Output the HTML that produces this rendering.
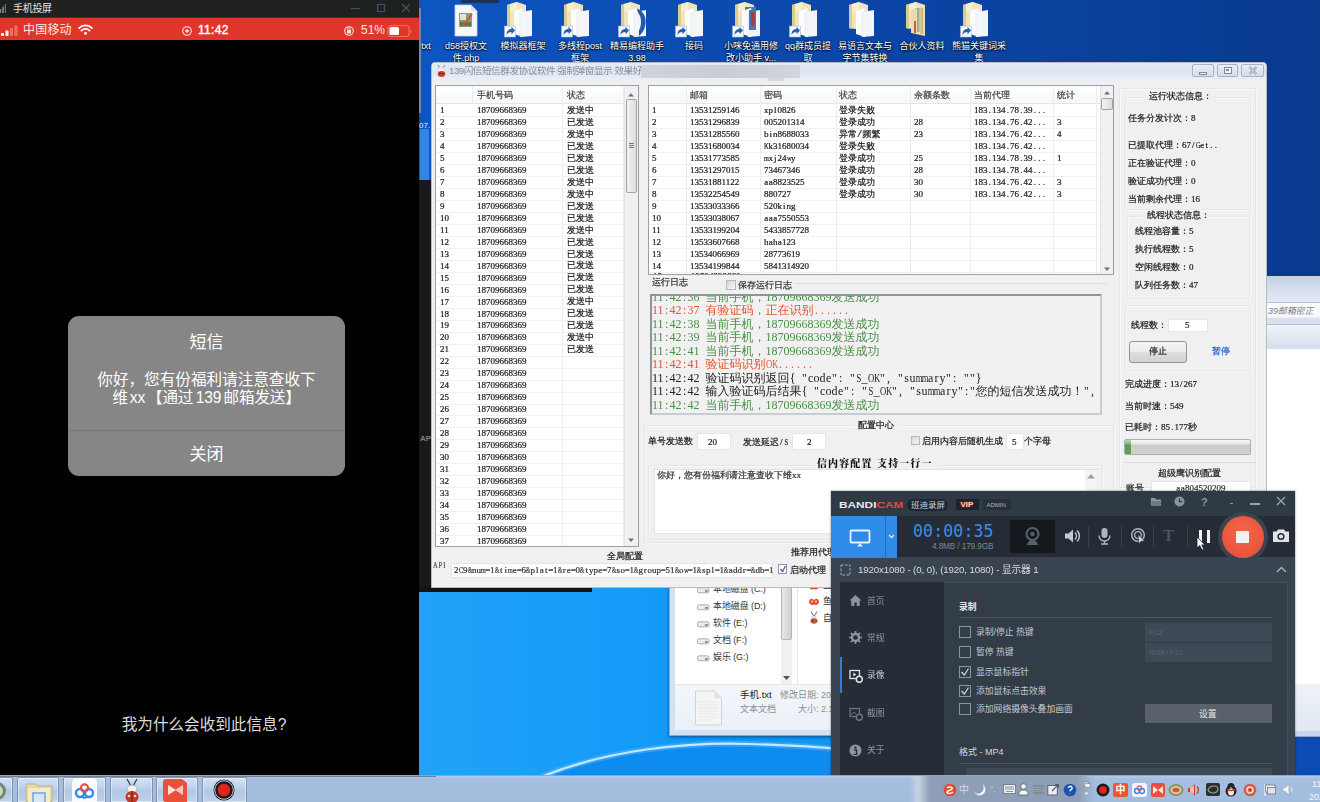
<!DOCTYPE html><html lang="zh"><head><meta charset="utf-8"><title>screen</title><style>
html,body{margin:0;padding:0}
body{width:1320px;height:802px;overflow:hidden;position:relative;background:#0a3f9e;font-family:"Liberation Sans","Noto Sans CJK SC",sans-serif;font-size:9px;color:#222}
div,span,svg{position:absolute;box-sizing:border-box}
span.i{position:static}
.t{white-space:nowrap;line-height:1}
.s{font-family:"Liberation Mono","WenQuanYi Zen Hei","Noto Sans CJK SC",monospace;font-size:9px;color:#1c1c1c;white-space:nowrap;line-height:10px;-webkit-text-stroke-width:.22px}
.m{font-family:"Liberation Serif","WenQuanYi Zen Hei",serif}
b{display:inline-flex;justify-content:center;font-weight:normal;white-space:pre}
.dl{color:#fff;font-size:9px;line-height:12px;text-align:center;width:64px;text-shadow:0 1px 2px #000,0 0 2px #000;font-family:"Liberation Sans","Noto Sans CJK SC",sans-serif}
.gb{border:1px solid #e6e6e6;border-radius:2px;box-shadow:inset 1px 1px 0 #f8f8f8,1px 1px 0 #f8f8f8}
.inp{background:#fff;border:1px solid #e3e6ea}
.lg{font-family:"Liberation Serif","WenQuanYi Zen Hei","Noto Sans CJK SC",sans-serif;font-size:12px;line-height:14px;height:14px}
.lm{font-family:"Liberation Serif",serif;font-size:12px}
</style></head><body>
<div style="left:0;top:0;width:1320px;height:802px;background:linear-gradient(90deg,#0d55c2 420px,#0b48ab 800px,#083a8e 1320px)"></div>
<div style="left:419px;top:587px;width:901px;height:190px;background:linear-gradient(90deg,#22a2fa 0,#129af7 250px,#0f95f4 420px)"></div>
<svg style="left:419px;top:587px" width="420" height="190" viewBox="0 0 420 190"><path d="M128 190 C195 163 270 157 330 158 S400 161 420 163 L420 190Z" fill="#0d8bf0"/><path d="M122 190 C190 162 270 155 330 157 S400 160 420 162" fill="none" stroke="#62bdff" stroke-width="6" opacity=".4"/><path d="M122 190 C190 162 270 155 330 157 S400 160 420 162" fill="none" stroke="#d6eeff" stroke-width="2.200" opacity=".9"/></svg>
<svg style="left:449px;top:1px" width="34" height="38" viewBox="0 0 34 38"><path d="M6 4h16l6 6v25H6z" fill="#f6f7f9" stroke="#cfd4db" stroke-width=".8"/><path d="M22 4v6h6z" fill="#d9dde4"/><rect x="10" y="12" width="13" height="14" fill="#8a9a7c"/><rect x="11" y="13" width="6" height="6" fill="#dfe6d2"/><rect x="11" y="21" width="11" height="4" fill="#5d7a50"/><path d="M14 25l9-12" stroke="#d9542f" stroke-width="1.800"/></svg>
<div class="dl" style="left:434px;top:40px">d58授权文<br>件.php</div>
<svg style="left:504px;top:1px" width="34" height="38" viewBox="0 0 34 38"><path d="M3 4l10-3 9 3v26l-19-3z" fill="#efe5bd"/><path d="M3 4l3-1v25l-3-1z" fill="#dccb8f"/><path d="M6 3l7-2v8l-7 2z" fill="#f6efcf"/><path d="M10 10l9-3v29l-9-3z" fill="#fdfdfd"/><path d="M19 7v29" stroke="#d5d9df" stroke-width=".7"/><path d="M16 11l12-2v26l-12 1z" fill="#f3f5f9"/><path d="M16 11v25" stroke="#dfe3e8" stroke-width=".6"/><rect x="0.500" y="25" width="11" height="11" fill="#f4f7fb" stroke="#a9b8cd" stroke-width=".6"/><path d="M2.500 34c0-4.500 2.500-6 5-6v-2.300l3.500 3.800-3.500 3.800v-2.300c-2.500 0-4 1-5 3z" fill="#2c5fb3"/></svg>
<div class="dl" style="left:491px;top:40px">模拟器框架</div>
<svg style="left:561px;top:1px" width="34" height="38" viewBox="0 0 34 38"><path d="M3 4l10-3 9 3v26l-19-3z" fill="#efe5bd"/><path d="M3 4l3-1v25l-3-1z" fill="#dccb8f"/><path d="M6 3l7-2v8l-7 2z" fill="#f6efcf"/><path d="M10 10l9-3v29l-9-3z" fill="#fdfdfd"/><path d="M19 7v29" stroke="#d5d9df" stroke-width=".7"/><path d="M16 11l12-2v26l-12 1z" fill="#f3f5f9"/><path d="M16 11v25" stroke="#dfe3e8" stroke-width=".6"/><rect x="0.500" y="25" width="11" height="11" fill="#f4f7fb" stroke="#a9b8cd" stroke-width=".6"/><path d="M2.500 34c0-4.500 2.500-6 5-6v-2.300l3.500 3.800-3.500 3.800v-2.300c-2.500 0-4 1-5 3z" fill="#2c5fb3"/></svg>
<div class="dl" style="left:548px;top:40px">多线程post<br>框架</div>
<svg style="left:618px;top:1px" width="34" height="38" viewBox="0 0 34 38"><path d="M3 4l10-3 9 3v26l-19-3z" fill="#efe5bd"/><path d="M3 4l3-1v25l-3-1z" fill="#dccb8f"/><path d="M6 3l7-2v8l-7 2z" fill="#f6efcf"/><path d="M18 7c9 3 10 18 1 25z" fill="#2d62b3"/><path d="M10 10l9-3v29l-9-3z" fill="#fdfdfd"/><path d="M19 7v29" stroke="#d5d9df" stroke-width=".7"/><path d="M16 11l12-2v26l-12 1z" fill="#f3f5f9"/><path d="M16 11v25" stroke="#dfe3e8" stroke-width=".6"/><path d="M20 8c10 4 10 20 1 27z" fill="#2459ad"/><path d="M20 12c4 3 4 14 0 19z" fill="#f3f5f9"/><rect x="0.500" y="25" width="11" height="11" fill="#f4f7fb" stroke="#a9b8cd" stroke-width=".6"/><path d="M2.500 34c0-4.500 2.500-6 5-6v-2.300l3.500 3.800-3.500 3.800v-2.300c-2.500 0-4 1-5 3z" fill="#2c5fb3"/></svg>
<div class="dl" style="left:605px;top:40px">精易编程助手<br>3.98</div>
<svg style="left:675px;top:1px" width="34" height="38" viewBox="0 0 34 38"><path d="M3 4l10-3 9 3v26l-19-3z" fill="#efe5bd"/><path d="M3 4l3-1v25l-3-1z" fill="#dccb8f"/><path d="M6 3l7-2v8l-7 2z" fill="#f6efcf"/><path d="M10 10l9-3v29l-9-3z" fill="#fdfdfd"/><path d="M19 7v29" stroke="#d5d9df" stroke-width=".7"/><path d="M16 11l12-2v26l-12 1z" fill="#f3f5f9"/><path d="M16 11v25" stroke="#dfe3e8" stroke-width=".6"/><rect x="0.500" y="25" width="11" height="11" fill="#f4f7fb" stroke="#a9b8cd" stroke-width=".6"/><path d="M2.500 34c0-4.500 2.500-6 5-6v-2.300l3.500 3.800-3.500 3.800v-2.300c-2.500 0-4 1-5 3z" fill="#2c5fb3"/></svg>
<div class="dl" style="left:662px;top:40px">接码</div>
<svg style="left:732px;top:1px" width="34" height="38" viewBox="0 0 34 38"><path d="M3 4l10-3 9 3v26l-19-3z" fill="#efe5bd"/><path d="M3 4l3-1v25l-3-1z" fill="#dccb8f"/><path d="M6 3l7-2v8l-7 2z" fill="#f6efcf"/><rect x="13" y="6" width="11" height="22" fill="#4977bd"/><rect x="17" y="8" width="4.500" height="16" fill="#b5382e"/><path d="M10 10l9-3v29l-9-3z" fill="#fdfdfd"/><path d="M19 7v29" stroke="#d5d9df" stroke-width=".7"/><path d="M16 11l12-2v26l-12 1z" fill="#f3f5f9"/><path d="M16 11v25" stroke="#dfe3e8" stroke-width=".6"/><rect x="17" y="9" width="7" height="20" fill="#4977bd"/><rect x="19" y="11" width="3.500" height="14" fill="#b5382e"/><rect x="0.500" y="25" width="11" height="11" fill="#f4f7fb" stroke="#a9b8cd" stroke-width=".6"/><path d="M2.500 34c0-4.500 2.500-6 5-6v-2.300l3.500 3.800-3.500 3.800v-2.300c-2.500 0-4 1-5 3z" fill="#2c5fb3"/></svg>
<div class="dl" style="left:719px;top:40px">小咪免通用修<br>改小助手 v...</div>
<svg style="left:789px;top:1px" width="34" height="38" viewBox="0 0 34 38"><path d="M3 4l10-3 9 3v26l-19-3z" fill="#efe5bd"/><path d="M3 4l3-1v25l-3-1z" fill="#dccb8f"/><path d="M6 3l7-2v8l-7 2z" fill="#f6efcf"/><path d="M10 10l9-3v29l-9-3z" fill="#fdfdfd"/><path d="M19 7v29" stroke="#d5d9df" stroke-width=".7"/><path d="M16 11l12-2v26l-12 1z" fill="#f3f5f9"/><path d="M16 11v25" stroke="#dfe3e8" stroke-width=".6"/><rect x="0.500" y="25" width="11" height="11" fill="#f4f7fb" stroke="#a9b8cd" stroke-width=".6"/><path d="M2.500 34c0-4.500 2.500-6 5-6v-2.300l3.500 3.800-3.500 3.800v-2.300c-2.500 0-4 1-5 3z" fill="#2c5fb3"/></svg>
<div class="dl" style="left:776px;top:40px">qq群成员提<br>取</div>
<svg style="left:846px;top:1px" width="34" height="38" viewBox="0 0 34 38"><path d="M3 4l10-3 9 3v26l-19-3z" fill="#efe5bd"/><path d="M3 4l3-1v25l-3-1z" fill="#dccb8f"/><path d="M6 3l7-2v8l-7 2z" fill="#f6efcf"/><path d="M10 10l9-3v29l-9-3z" fill="#fdfdfd"/><path d="M19 7v29" stroke="#d5d9df" stroke-width=".7"/><path d="M16 11l12-2v26l-12 1z" fill="#f3f5f9"/><path d="M16 11v25" stroke="#dfe3e8" stroke-width=".6"/></svg>
<div class="dl" style="left:833px;top:40px">易语言文本与<br>字节集转换</div>
<svg style="left:903px;top:1px" width="34" height="38" viewBox="0 0 34 38"><path d="M3 4l10-3 9 3v26l-19-3z" fill="#efe5bd"/><path d="M3 4l3-1v25l-3-1z" fill="#dccb8f"/><path d="M6 3l7-2v8l-7 2z" fill="#f6efcf"/><rect x="12" y="7" width="9" height="24" fill="#9a9c92" opacity=".8"/><path d="M8 9l14-4v30l-14-3z" fill="#e9dcae"/><rect x="14" y="7" width="2.500" height="24" fill="#9fb08a"/><rect x="17.500" y="7" width="2.500" height="26" fill="#c9b98a"/><rect x="11" y="20" width="2" height="12" fill="#c9564a"/></svg>
<div class="dl" style="left:890px;top:40px">合伙人资料</div>
<svg style="left:960px;top:1px" width="34" height="38" viewBox="0 0 34 38"><path d="M3 4l10-3 9 3v26l-19-3z" fill="#efe5bd"/><path d="M3 4l3-1v25l-3-1z" fill="#dccb8f"/><path d="M6 3l7-2v8l-7 2z" fill="#f6efcf"/><path d="M10 10l9-3v29l-9-3z" fill="#fdfdfd"/><path d="M19 7v29" stroke="#d5d9df" stroke-width=".7"/><path d="M16 11l12-2v26l-12 1z" fill="#f3f5f9"/><path d="M16 11v25" stroke="#dfe3e8" stroke-width=".6"/><rect x="0.500" y="25" width="11" height="11" fill="#f4f7fb" stroke="#a9b8cd" stroke-width=".6"/><path d="M2.500 34c0-4.500 2.500-6 5-6v-2.300l3.500 3.800-3.500 3.800v-2.300c-2.500 0-4 1-5 3z" fill="#2c5fb3"/></svg>
<div class="dl" style="left:947px;top:40px">熊猫关键词采<br>集</div>
<div class="dl" style="left:394px;top:40px">txt</div>
<div style="left:461px;top:0;width:38px;height:3px;background:#1d2a44;opacity:.8"></div>
<div style="left:1266px;top:276px;width:54px;height:461px;background:#fff"></div>
<div style="left:1266px;top:276px;width:54px;height:26px;background:linear-gradient(180deg,#c3d1e5,#d4dfee 50%,#e2eaf4)"></div>
<div style="left:1266px;top:301.5px;width:54px;height:23px;background:linear-gradient(180deg,#fafbfd 0,#f6f8fb 65%,#d6e1ef 75%,#d6e1ef);border-top:1px solid #b9c2cf;border-bottom:1px solid #b9c2cf"></div>
<div class="t" style="left:1268px;top:304.5px;height:12px;line-height:12px;font-family:'Liberation Sans','Noto Sans CJK SC',sans-serif;font-size:9px;font-style:italic;color:#7b828c;letter-spacing:-0.100px">39邮箱密正</div>
<div style="left:1266px;top:324.5px;width:54px;height:24px;background:linear-gradient(180deg,#f0f4f9,#e2e9f3 50%,#d5e0ee)"></div>
<div style="left:1295px;top:684px;width:25px;height:47px;background:linear-gradient(180deg,#eef2f8,#e1e8f2)"></div>
<div style="left:1295px;top:731px;width:25px;height:6px;background:#c7d7ec;border-bottom:1px solid #8fa5c4"></div>
<div style="left:1295px;top:737px;width:25px;height:40px;background:#0b4bb3"></div>
<div style="left:669px;top:580px;width:170px;height:156px;background:#d3e1f1;border:1px solid #8ea6c4;box-shadow:0 1px 3px rgba(0,0,30,.5)"></div>
<div style="left:675px;top:584px;width:160px;height:100px;background:#fff"></div>
<div style="left:675px;top:684px;width:160px;height:46px;background:linear-gradient(180deg,#f3f7fc,#eaf0f8);border-top:1px solid #dfe7f1"></div>
<div style="left:797px;top:584px;width:1px;height:100px;background:#e4eaf2"></div>
<svg style="left:697px;top:587px" width="13" height="7" viewBox="0 0 13 7"><rect x=".5" y=".8" width="11.500" height="5" rx="1.800" fill="#ececec" stroke="#9a9a9a" stroke-width=".8"/><rect x="8" y="3.200" width="2.800" height="1.500" fill="#777"/></svg>
<div class="t" style="left:713px;top:583.0px;height:12px;line-height:12px;font-family:'Liberation Sans','Noto Sans CJK SC',sans-serif;font-size:9px;color:#333;letter-spacing:-0.100px">本地磁盘 (C:)</div>
<svg style="left:697px;top:604px" width="13" height="7" viewBox="0 0 13 7"><rect x=".5" y=".8" width="11.500" height="5" rx="1.800" fill="#ececec" stroke="#9a9a9a" stroke-width=".8"/><rect x="8" y="3.200" width="2.800" height="1.500" fill="#777"/></svg>
<div class="t" style="left:713px;top:600.0px;height:12px;line-height:12px;font-family:'Liberation Sans','Noto Sans CJK SC',sans-serif;font-size:9px;color:#333;letter-spacing:-0.100px">本地磁盘 (D:)</div>
<svg style="left:697px;top:621px" width="13" height="7" viewBox="0 0 13 7"><rect x=".5" y=".8" width="11.500" height="5" rx="1.800" fill="#ececec" stroke="#9a9a9a" stroke-width=".8"/><rect x="8" y="3.200" width="2.800" height="1.500" fill="#777"/></svg>
<div class="t" style="left:713px;top:617.0px;height:12px;line-height:12px;font-family:'Liberation Sans','Noto Sans CJK SC',sans-serif;font-size:9px;color:#333;letter-spacing:-0.100px">软件 (E:)</div>
<svg style="left:697px;top:638px" width="13" height="7" viewBox="0 0 13 7"><rect x=".5" y=".8" width="11.500" height="5" rx="1.800" fill="#ececec" stroke="#9a9a9a" stroke-width=".8"/><rect x="8" y="3.200" width="2.800" height="1.500" fill="#777"/></svg>
<div class="t" style="left:713px;top:634.0px;height:12px;line-height:12px;font-family:'Liberation Sans','Noto Sans CJK SC',sans-serif;font-size:9px;color:#333;letter-spacing:-0.100px">文档 (F:)</div>
<svg style="left:697px;top:655px" width="13" height="7" viewBox="0 0 13 7"><rect x=".5" y=".8" width="11.500" height="5" rx="1.800" fill="#ececec" stroke="#9a9a9a" stroke-width=".8"/><rect x="8" y="3.200" width="2.800" height="1.500" fill="#777"/></svg>
<div class="t" style="left:713px;top:651.0px;height:12px;line-height:12px;font-family:'Liberation Sans','Noto Sans CJK SC',sans-serif;font-size:9px;color:#333;letter-spacing:-0.100px">娱乐 (G:)</div>
<div style="left:781px;top:584px;width:11px;height:100px;background:#f0f0f0"></div>
<div style="left:781px;top:584px;width:11px;height:56px;background:linear-gradient(90deg,#e9e9e9,#cfcfcf);border:1px solid #b5b5b5;border-radius:2px"></div>
<svg style="left:783px;top:676px" width="7" height="4" viewBox="0 0 7 4"><path d="M0 0h7L3.500 4z" fill="#555"/></svg>
<svg style="left:808px;top:581px" width="12" height="10" viewBox="0 0 12 10"><path d="M1 5c0-3 4-4 5-1 1-3 5-2 5 1s-3 4-5 3c-2 1-5 0-5-3z" fill="#d24a2a"/></svg>
<svg style="left:808px;top:596.5px" width="12" height="9" viewBox="0 0 12 9"><path d="M1 4.500c0-3 4-4 5-1 1-3 5-2 5 1s-3 4-5 3c-2 1-5 0-5-3z" fill="#e2512f"/><circle cx="4" cy="4.500" r=".9" fill="#fbe3dc"/><circle cx="8" cy="4.500" r=".9" fill="#fbe3dc"/></svg>
<svg style="left:809px;top:610.5px" width="10" height="13" viewBox="0 0 10 13"><path d="M2 .5l3 5M8 .5l-3 5" stroke="#555" stroke-width=".9" fill="none"/><ellipse cx="5" cy="6.500" rx="2.200" ry="1.800" fill="#eee" stroke="#aaa" stroke-width=".4"/><ellipse cx="5" cy="10" rx="3.600" ry="2.800" fill="#c9553c"/><circle cx="3.600" cy="9.800" r=".7" fill="#333"/></svg>
<div class="t" style="left:823px;top:580.0px;height:12px;line-height:12px;font-family:'Liberation Sans','Noto Sans CJK SC',sans-serif;font-size:9px;color:#333">三</div>
<div class="t" style="left:823px;top:595.0px;height:12px;line-height:12px;font-family:'Liberation Sans','Noto Sans CJK SC',sans-serif;font-size:9px;color:#333">鱼</div>
<div class="t" style="left:823px;top:612.0px;height:12px;line-height:12px;font-family:'Liberation Sans','Noto Sans CJK SC',sans-serif;font-size:9px;color:#333">自</div>
<svg style="left:694px;top:690px" width="29" height="36" viewBox="0 0 29 36"><path d="M1.500 1h19l7 7v27h-26z" fill="#f4f4f4" stroke="#d2d2d2" stroke-width="1"/><path d="M20.500 1v7h7z" fill="#e2e2e2"/><path d="M5 12h18M5 15h18M5 18h18M5 21h18M5 24h18M5 27h18M5 30h12" stroke="#e6e6e6" stroke-width=".8"/></svg>
<div class="t" style="left:740px;top:689.0px;height:12px;line-height:12px;font-family:'Liberation Sans','Noto Sans CJK SC',sans-serif;font-size:9.500px;color:#222">手机.txt</div>
<div class="t" style="left:780px;top:689.0px;height:12px;line-height:12px;font-family:'Liberation Sans','Noto Sans CJK SC',sans-serif;font-size:9px;color:#8a8f96">修改日期: 20</div>
<div class="t" style="left:740px;top:703.0px;height:12px;line-height:12px;font-family:'Liberation Sans','Noto Sans CJK SC',sans-serif;font-size:9px;color:#8a8f96">文本文档</div>
<div class="t" style="left:798px;top:703.0px;height:12px;line-height:12px;font-family:'Liberation Sans','Noto Sans CJK SC',sans-serif;font-size:9px;color:#8a8f96">大小: 2.1</div>
<div style="left:419px;top:180px;width:14px;height:412px;background:#17191b"></div>
<div style="left:419px;top:586px;width:173px;height:6px;background:#111315"></div>
<div style="left:420px;top:129px;width:9px;height:51px;background:#2f86e6"></div>
<div style="left:419px;top:8px;width:1.500px;height:105px;background:#7f93b0;opacity:.85"></div>
<div class="t " style="left:419px;top:120.5px;height:9px;line-height:9px;color:#e8eefc;font-size:8px">07.</div>
<div class="t " style="left:420px;top:433.5px;height:9px;line-height:9px;color:#7d8288;font-size:8px;font-weight:bold">AP</div>
<div id="app" style="will-change:transform;left:431px;top:62px;width:836px;height:526px;background:#f0f0f0;border:1px solid #b4bcc8;border-radius:4px 4px 0 0;overflow:hidden">
<div class="" style="left:0px;top:0px;width:834px;height:16px;background:linear-gradient(180deg,#e4ecf6,#dbe5f1 55%,#e9eff7)"></div>
<div class="" style="left:0px;top:16px;width:834px;height:6px;background:linear-gradient(180deg,#e9eff7,#f0f0f0)"></div>
<svg style="left:3px;top:1px" width="13" height="14" viewBox="0 0 13 14"><path d="M3 1l2 3M10 1l-2 3" stroke="#666" stroke-width=".8"/><ellipse cx="6.5" cy="6" rx="3.600" ry="2.800" fill="#f4f4f4" stroke="#bbb" stroke-width=".5"/><ellipse cx="6.500" cy="10" rx="3.800" ry="3" fill="#c8452e"/><circle cx="5" cy="9.500" r=".9" fill="#611"/><circle cx="8" cy="9.500" r=".9" fill="#611"/></svg>
<div class="t " style="left:17px;top:2.0px;height:12px;line-height:12px;font-size:9.600px;color:#8a8f96;letter-spacing:-0.450px;font-family:'Liberation Sans','Noto Sans CJK SC',sans-serif">139闪信短信群发协议软件 强制弹窗显示 效果好</div>
<div class="" style="left:209px;top:2px;width:159px;height:13px;background:linear-gradient(90deg,#cdd1d7,#c6cad0 50%,#cfd3d9);border-radius:1px;opacity:.9"></div>
<div class="" style="left:336px;top:15px;width:16px;height:3px;background:#cfd3d8;opacity:.8"></div>
<div style="left:760px;top:1px;width:22px;height:13px;border:1px solid #aab4c2;border-radius:2px;background:linear-gradient(180deg,#e9eff7,#d5deea)"></div>
<div style="left:767.0px;top:9px;width:8px;height:3px;border:1px solid #808994;background:#f5f5f5"></div>
<div style="left:785px;top:1px;width:21px;height:13px;border:1px solid #aab4c2;border-radius:2px;background:linear-gradient(180deg,#e9eff7,#d5deea)"></div>
<div style="left:791.5px;top:3.5px;width:8px;height:7px;border:1px solid #808994;background:#f5f5f5"></div><div style="left:794.0px;top:6px;width:3px;height:2px;background:#808994"></div>
<div style="left:809px;top:1px;width:23px;height:13px;border:1px solid #aab4c2;border-radius:2px;background:linear-gradient(180deg,#e9eff7,#d5deea)"></div>
<svg style="left:815.5px;top:3px" width="10" height="9" viewBox="0 0 10 9"><path d="M1.500 1l7 7M8.500 1l-7 7" stroke="#8a929c" stroke-width="2.200"/><path d="M1.500 1l7 7M8.500 1l-7 7" stroke="#f4f4f4" stroke-width=".9"/></svg>
<div class="" style="left:3px;top:22px;width:204px;height:462px;background:#fff;border:1px solid #9aa0a8"></div>
<div class="" style="left:4px;top:23px;width:188px;height:18px;background:linear-gradient(180deg,#fff,#f6f7f9);border-bottom:1px solid #e3e5e8"></div>
<div class="" style="left:130px;top:23px;width:1px;height:460px;background:#ececec"></div>
<div class="" style="left:191px;top:23px;width:1px;height:460px;background:#ececec"></div>
<div class="" style="left:40px;top:23px;width:1px;height:17px;background:#e9ebee"></div>
<div class="" style="left:4px;top:52.980000000000004px;width:188px;height:1px;background:#f0f0f0"></div>
<div class="" style="left:4px;top:64.96000000000001px;width:188px;height:1px;background:#f0f0f0"></div>
<div class="" style="left:4px;top:76.94px;width:188px;height:1px;background:#f0f0f0"></div>
<div class="" style="left:4px;top:88.92000000000002px;width:188px;height:1px;background:#f0f0f0"></div>
<div class="" style="left:4px;top:100.9px;width:188px;height:1px;background:#f0f0f0"></div>
<div class="" style="left:4px;top:112.88px;width:188px;height:1px;background:#f0f0f0"></div>
<div class="" style="left:4px;top:124.86000000000001px;width:188px;height:1px;background:#f0f0f0"></div>
<div class="" style="left:4px;top:136.84px;width:188px;height:1px;background:#f0f0f0"></div>
<div class="" style="left:4px;top:148.82px;width:188px;height:1px;background:#f0f0f0"></div>
<div class="" style="left:4px;top:160.8px;width:188px;height:1px;background:#f0f0f0"></div>
<div class="" style="left:4px;top:172.78px;width:188px;height:1px;background:#f0f0f0"></div>
<div class="" style="left:4px;top:184.76px;width:188px;height:1px;background:#f0f0f0"></div>
<div class="" style="left:4px;top:196.74px;width:188px;height:1px;background:#f0f0f0"></div>
<div class="" style="left:4px;top:208.72000000000003px;width:188px;height:1px;background:#f0f0f0"></div>
<div class="" style="left:4px;top:220.70000000000005px;width:188px;height:1px;background:#f0f0f0"></div>
<div class="" style="left:4px;top:232.68px;width:188px;height:1px;background:#f0f0f0"></div>
<div class="" style="left:4px;top:244.65999999999997px;width:188px;height:1px;background:#f0f0f0"></div>
<div class="" style="left:4px;top:256.64px;width:188px;height:1px;background:#f0f0f0"></div>
<div class="" style="left:4px;top:268.62px;width:188px;height:1px;background:#f0f0f0"></div>
<div class="" style="left:4px;top:280.6px;width:188px;height:1px;background:#f0f0f0"></div>
<div class="" style="left:4px;top:292.58000000000004px;width:188px;height:1px;background:#f0f0f0"></div>
<div class="" style="left:4px;top:304.56px;width:188px;height:1px;background:#f0f0f0"></div>
<div class="" style="left:4px;top:316.54px;width:188px;height:1px;background:#f0f0f0"></div>
<div class="" style="left:4px;top:328.52px;width:188px;height:1px;background:#f0f0f0"></div>
<div class="" style="left:4px;top:340.5px;width:188px;height:1px;background:#f0f0f0"></div>
<div class="" style="left:4px;top:352.48px;width:188px;height:1px;background:#f0f0f0"></div>
<div class="" style="left:4px;top:364.46000000000004px;width:188px;height:1px;background:#f0f0f0"></div>
<div class="" style="left:4px;top:376.44px;width:188px;height:1px;background:#f0f0f0"></div>
<div class="" style="left:4px;top:388.42px;width:188px;height:1px;background:#f0f0f0"></div>
<div class="" style="left:4px;top:400.40000000000003px;width:188px;height:1px;background:#f0f0f0"></div>
<div class="" style="left:4px;top:412.38px;width:188px;height:1px;background:#f0f0f0"></div>
<div class="" style="left:4px;top:424.36px;width:188px;height:1px;background:#f0f0f0"></div>
<div class="" style="left:4px;top:436.34000000000003px;width:188px;height:1px;background:#f0f0f0"></div>
<div class="" style="left:4px;top:448.32px;width:188px;height:1px;background:#f0f0f0"></div>
<div class="" style="left:4px;top:460.29999999999995px;width:188px;height:1px;background:#f0f0f0"></div>
<div class="" style="left:4px;top:472.28px;width:188px;height:1px;background:#f0f0f0"></div>
<div class="t s" style="left:45px;top:28.0px;height:10px;line-height:10px;color:#444">手机号码</div>
<div class="t s" style="left:135px;top:28.0px;height:10px;line-height:10px;color:#444">状态</div>
<div class="t s m" style="left:8px;top:41.8px;height:10px;line-height:10px;">1</div>
<div class="t s m" style="left:45px;top:41.8px;height:10px;line-height:10px;">18709668369</div>
<div class="t s" style="left:135px;top:42.7px;height:10px;line-height:10px;">发送中</div>
<div class="t s m" style="left:8px;top:53.8px;height:10px;line-height:10px;">2</div>
<div class="t s m" style="left:45px;top:53.8px;height:10px;line-height:10px;">18709668369</div>
<div class="t s" style="left:135px;top:54.7px;height:10px;line-height:10px;">已发送</div>
<div class="t s m" style="left:8px;top:65.8px;height:10px;line-height:10px;">3</div>
<div class="t s m" style="left:45px;top:65.8px;height:10px;line-height:10px;">18709668369</div>
<div class="t s" style="left:135px;top:66.7px;height:10px;line-height:10px;">发送中</div>
<div class="t s m" style="left:8px;top:77.7px;height:10px;line-height:10px;">4</div>
<div class="t s m" style="left:45px;top:77.7px;height:10px;line-height:10px;">18709668369</div>
<div class="t s" style="left:135px;top:78.6px;height:10px;line-height:10px;">已发送</div>
<div class="t s m" style="left:8px;top:89.7px;height:10px;line-height:10px;">5</div>
<div class="t s m" style="left:45px;top:89.7px;height:10px;line-height:10px;">18709668369</div>
<div class="t s" style="left:135px;top:90.6px;height:10px;line-height:10px;">已发送</div>
<div class="t s m" style="left:8px;top:101.7px;height:10px;line-height:10px;">6</div>
<div class="t s m" style="left:45px;top:101.7px;height:10px;line-height:10px;">18709668369</div>
<div class="t s" style="left:135px;top:102.6px;height:10px;line-height:10px;">已发送</div>
<div class="t s m" style="left:8px;top:113.7px;height:10px;line-height:10px;">7</div>
<div class="t s m" style="left:45px;top:113.7px;height:10px;line-height:10px;">18709668369</div>
<div class="t s" style="left:135px;top:114.6px;height:10px;line-height:10px;">发送中</div>
<div class="t s m" style="left:8px;top:125.7px;height:10px;line-height:10px;">8</div>
<div class="t s m" style="left:45px;top:125.7px;height:10px;line-height:10px;">18709668369</div>
<div class="t s" style="left:135px;top:126.6px;height:10px;line-height:10px;">发送中</div>
<div class="t s m" style="left:8px;top:137.6px;height:10px;line-height:10px;">9</div>
<div class="t s m" style="left:45px;top:137.6px;height:10px;line-height:10px;">18709668369</div>
<div class="t s" style="left:135px;top:138.5px;height:10px;line-height:10px;">已发送</div>
<div class="t s m" style="left:8px;top:149.6px;height:10px;line-height:10px;">10</div>
<div class="t s m" style="left:45px;top:149.6px;height:10px;line-height:10px;">18709668369</div>
<div class="t s" style="left:135px;top:150.5px;height:10px;line-height:10px;">已发送</div>
<div class="t s m" style="left:8px;top:161.6px;height:10px;line-height:10px;">11</div>
<div class="t s m" style="left:45px;top:161.6px;height:10px;line-height:10px;">18709668369</div>
<div class="t s" style="left:135px;top:162.5px;height:10px;line-height:10px;">发送中</div>
<div class="t s m" style="left:8px;top:173.6px;height:10px;line-height:10px;">12</div>
<div class="t s m" style="left:45px;top:173.6px;height:10px;line-height:10px;">18709668369</div>
<div class="t s" style="left:135px;top:174.5px;height:10px;line-height:10px;">已发送</div>
<div class="t s m" style="left:8px;top:185.6px;height:10px;line-height:10px;">13</div>
<div class="t s m" style="left:45px;top:185.6px;height:10px;line-height:10px;">18709668369</div>
<div class="t s" style="left:135px;top:186.5px;height:10px;line-height:10px;">已发送</div>
<div class="t s m" style="left:8px;top:197.5px;height:10px;line-height:10px;">14</div>
<div class="t s m" style="left:45px;top:197.5px;height:10px;line-height:10px;">18709668369</div>
<div class="t s" style="left:135px;top:198.4px;height:10px;line-height:10px;">已发送</div>
<div class="t s m" style="left:8px;top:209.5px;height:10px;line-height:10px;">15</div>
<div class="t s m" style="left:45px;top:209.5px;height:10px;line-height:10px;">18709668369</div>
<div class="t s" style="left:135px;top:210.4px;height:10px;line-height:10px;">已发送</div>
<div class="t s m" style="left:8px;top:221.5px;height:10px;line-height:10px;">16</div>
<div class="t s m" style="left:45px;top:221.5px;height:10px;line-height:10px;">18709668369</div>
<div class="t s" style="left:135px;top:222.4px;height:10px;line-height:10px;">已发送</div>
<div class="t s m" style="left:8px;top:233.5px;height:10px;line-height:10px;">17</div>
<div class="t s m" style="left:45px;top:233.5px;height:10px;line-height:10px;">18709668369</div>
<div class="t s" style="left:135px;top:234.4px;height:10px;line-height:10px;">发送中</div>
<div class="t s m" style="left:8px;top:245.5px;height:10px;line-height:10px;">18</div>
<div class="t s m" style="left:45px;top:245.5px;height:10px;line-height:10px;">18709668369</div>
<div class="t s" style="left:135px;top:246.4px;height:10px;line-height:10px;">已发送</div>
<div class="t s m" style="left:8px;top:257.4px;height:10px;line-height:10px;">19</div>
<div class="t s m" style="left:45px;top:257.4px;height:10px;line-height:10px;">18709668369</div>
<div class="t s" style="left:135px;top:258.3px;height:10px;line-height:10px;">已发送</div>
<div class="t s m" style="left:8px;top:269.4px;height:10px;line-height:10px;">20</div>
<div class="t s m" style="left:45px;top:269.4px;height:10px;line-height:10px;">18709668369</div>
<div class="t s" style="left:135px;top:270.3px;height:10px;line-height:10px;">发送中</div>
<div class="t s m" style="left:8px;top:281.4px;height:10px;line-height:10px;">21</div>
<div class="t s m" style="left:45px;top:281.4px;height:10px;line-height:10px;">18709668369</div>
<div class="t s" style="left:135px;top:282.3px;height:10px;line-height:10px;">已发送</div>
<div class="t s m" style="left:8px;top:293.4px;height:10px;line-height:10px;">22</div>
<div class="t s m" style="left:45px;top:293.4px;height:10px;line-height:10px;">18709668369</div>
<div class="t s m" style="left:8px;top:305.4px;height:10px;line-height:10px;">23</div>
<div class="t s m" style="left:45px;top:305.4px;height:10px;line-height:10px;">18709668369</div>
<div class="t s m" style="left:8px;top:317.3px;height:10px;line-height:10px;">24</div>
<div class="t s m" style="left:45px;top:317.3px;height:10px;line-height:10px;">18709668369</div>
<div class="t s m" style="left:8px;top:329.3px;height:10px;line-height:10px;">25</div>
<div class="t s m" style="left:45px;top:329.3px;height:10px;line-height:10px;">18709668369</div>
<div class="t s m" style="left:8px;top:341.3px;height:10px;line-height:10px;">26</div>
<div class="t s m" style="left:45px;top:341.3px;height:10px;line-height:10px;">18709668369</div>
<div class="t s m" style="left:8px;top:353.3px;height:10px;line-height:10px;">27</div>
<div class="t s m" style="left:45px;top:353.3px;height:10px;line-height:10px;">18709668369</div>
<div class="t s m" style="left:8px;top:365.3px;height:10px;line-height:10px;">28</div>
<div class="t s m" style="left:45px;top:365.3px;height:10px;line-height:10px;">18709668369</div>
<div class="t s m" style="left:8px;top:377.2px;height:10px;line-height:10px;">29</div>
<div class="t s m" style="left:45px;top:377.2px;height:10px;line-height:10px;">18709668369</div>
<div class="t s m" style="left:8px;top:389.2px;height:10px;line-height:10px;">30</div>
<div class="t s m" style="left:45px;top:389.2px;height:10px;line-height:10px;">18709668369</div>
<div class="t s m" style="left:8px;top:401.2px;height:10px;line-height:10px;">31</div>
<div class="t s m" style="left:45px;top:401.2px;height:10px;line-height:10px;">18709668369</div>
<div class="t s m" style="left:8px;top:413.2px;height:10px;line-height:10px;">32</div>
<div class="t s m" style="left:45px;top:413.2px;height:10px;line-height:10px;">18709668369</div>
<div class="t s m" style="left:8px;top:425.2px;height:10px;line-height:10px;">33</div>
<div class="t s m" style="left:45px;top:425.2px;height:10px;line-height:10px;">18709668369</div>
<div class="t s m" style="left:8px;top:437.1px;height:10px;line-height:10px;">34</div>
<div class="t s m" style="left:45px;top:437.1px;height:10px;line-height:10px;">18709668369</div>
<div class="t s m" style="left:8px;top:449.1px;height:10px;line-height:10px;">35</div>
<div class="t s m" style="left:45px;top:449.1px;height:10px;line-height:10px;">18709668369</div>
<div class="t s m" style="left:8px;top:461.1px;height:10px;line-height:10px;">36</div>
<div class="t s m" style="left:45px;top:461.1px;height:10px;line-height:10px;">18709668369</div>
<div class="t s m" style="left:8px;top:473.1px;height:10px;line-height:10px;">37</div>
<div class="t s m" style="left:45px;top:473.1px;height:10px;line-height:10px;">18709668369</div>
<div class="" style="left:192px;top:23px;width:14px;height:460px;background:#f1f1f1;border-left:1px solid #e4e4e4"></div>
<svg style="left:196px;top:30px" width="6" height="4" viewBox="0 0 8 5"><path d="M0 4.500L4 0l4 4.500z" fill="#6a707a"/></svg>
<svg style="left:196px;top:475px" width="6" height="4" viewBox="0 0 8 5"><path d="M0 .5L4 5 8 .5z" fill="#6a707a"/></svg>
<div class="" style="left:194px;top:36px;width:11px;height:94px;background:linear-gradient(90deg,#f3f3f3,#dcdcdc);border:1px solid #9da3ab;border-radius:2px"></div>
<div class="" style="left:197px;top:80px;width:5px;height:1px;background:#777"></div>
<div class="" style="left:197px;top:82px;width:5px;height:1px;background:#777"></div>
<div class="" style="left:197px;top:84px;width:5px;height:1px;background:#777"></div>
<div class="" style="left:216px;top:22px;width:466px;height:190px;background:#fff;border:1px solid #9aa0a8"></div>
<div class="" style="left:217px;top:23px;width:451px;height:18px;background:linear-gradient(180deg,#fff,#f6f7f9);border-bottom:1px solid #e3e5e8"></div>
<div class="" style="left:254px;top:23px;width:1px;height:188px;background:#ececec"></div>
<div class="" style="left:328px;top:23px;width:1px;height:188px;background:#ececec"></div>
<div class="" style="left:404px;top:23px;width:1px;height:188px;background:#ececec"></div>
<div class="" style="left:478px;top:23px;width:1px;height:188px;background:#ececec"></div>
<div class="" style="left:538px;top:23px;width:1px;height:188px;background:#ececec"></div>
<div class="" style="left:621px;top:23px;width:1px;height:188px;background:#ececec"></div>
<div class="" style="left:664px;top:23px;width:1px;height:188px;background:#ececec"></div>
<div class="" style="left:217px;top:52.980000000000004px;width:451px;height:1px;background:#f0f0f0"></div>
<div class="" style="left:217px;top:64.96000000000001px;width:451px;height:1px;background:#f0f0f0"></div>
<div class="" style="left:217px;top:76.94px;width:451px;height:1px;background:#f0f0f0"></div>
<div class="" style="left:217px;top:88.92000000000002px;width:451px;height:1px;background:#f0f0f0"></div>
<div class="" style="left:217px;top:100.9px;width:451px;height:1px;background:#f0f0f0"></div>
<div class="" style="left:217px;top:112.88px;width:451px;height:1px;background:#f0f0f0"></div>
<div class="" style="left:217px;top:124.86000000000001px;width:451px;height:1px;background:#f0f0f0"></div>
<div class="" style="left:217px;top:136.84px;width:451px;height:1px;background:#f0f0f0"></div>
<div class="" style="left:217px;top:148.82px;width:451px;height:1px;background:#f0f0f0"></div>
<div class="" style="left:217px;top:160.8px;width:451px;height:1px;background:#f0f0f0"></div>
<div class="" style="left:217px;top:172.78px;width:451px;height:1px;background:#f0f0f0"></div>
<div class="" style="left:217px;top:184.76px;width:451px;height:1px;background:#f0f0f0"></div>
<div class="" style="left:217px;top:196.74px;width:451px;height:1px;background:#f0f0f0"></div>
<div class="" style="left:217px;top:208.72000000000003px;width:451px;height:1px;background:#f0f0f0"></div>
<div class="t s" style="left:258px;top:28.0px;height:10px;line-height:10px;color:#444">邮箱</div>
<div class="t s" style="left:332px;top:28.0px;height:10px;line-height:10px;color:#444">密码</div>
<div class="t s" style="left:407px;top:28.0px;height:10px;line-height:10px;color:#444">状态</div>
<div class="t s" style="left:482px;top:28.0px;height:10px;line-height:10px;color:#444">余额条数</div>
<div class="t s" style="left:542px;top:28.0px;height:10px;line-height:10px;color:#444">当前代理</div>
<div class="t s" style="left:625px;top:28.0px;height:10px;line-height:10px;color:#444">统计</div>
<div class="t s m" style="left:220px;top:41.8px;height:10px;line-height:10px;">1</div>
<div class="t s m" style="left:258px;top:41.8px;height:10px;line-height:10px;">13531259146</div>
<div class="t s m" style="left:332px;top:41.8px;height:10px;line-height:10px;"><b style="width:4.5px">x</b><b style="width:4.5px">p</b><b style="width:4.5px">l</b>0826</div>
<div class="t s" style="left:407px;top:42.7px;height:10px;line-height:10px;">登录失败</div>
<div class="t s m" style="left:542px;top:41.8px;height:10px;line-height:10px;">183<b style="width:4.5px">.</b>134<b style="width:4.5px">.</b>78<b style="width:4.5px">.</b>39<b style="width:4.5px">.</b><b style="width:4.5px">.</b><b style="width:4.5px">.</b></div>
<div class="t s m" style="left:220px;top:53.8px;height:10px;line-height:10px;">2</div>
<div class="t s m" style="left:258px;top:53.8px;height:10px;line-height:10px;">13531296839</div>
<div class="t s m" style="left:332px;top:53.8px;height:10px;line-height:10px;">005201314</div>
<div class="t s" style="left:407px;top:54.7px;height:10px;line-height:10px;">登录成功</div>
<div class="t s m" style="left:482px;top:53.8px;height:10px;line-height:10px;">28</div>
<div class="t s m" style="left:542px;top:53.8px;height:10px;line-height:10px;">183<b style="width:4.5px">.</b>134<b style="width:4.5px">.</b>76<b style="width:4.5px">.</b>42<b style="width:4.5px">.</b><b style="width:4.5px">.</b><b style="width:4.5px">.</b></div>
<div class="t s m" style="left:625px;top:53.8px;height:10px;line-height:10px;">3</div>
<div class="t s m" style="left:220px;top:65.8px;height:10px;line-height:10px;">3</div>
<div class="t s m" style="left:258px;top:65.8px;height:10px;line-height:10px;">13531285560</div>
<div class="t s m" style="left:332px;top:65.8px;height:10px;line-height:10px;"><b style="width:4.5px">b</b><b style="width:4.5px">i</b><b style="width:4.5px">n</b>8688033</div>
<div class="t s" style="left:407px;top:66.7px;height:10px;line-height:10px;">异常/频繁</div>
<div class="t s m" style="left:482px;top:65.8px;height:10px;line-height:10px;">23</div>
<div class="t s m" style="left:542px;top:65.8px;height:10px;line-height:10px;">183<b style="width:4.5px">.</b>134<b style="width:4.5px">.</b>76<b style="width:4.5px">.</b>42<b style="width:4.5px">.</b><b style="width:4.5px">.</b><b style="width:4.5px">.</b></div>
<div class="t s m" style="left:625px;top:65.8px;height:10px;line-height:10px;">4</div>
<div class="t s m" style="left:220px;top:77.7px;height:10px;line-height:10px;">4</div>
<div class="t s m" style="left:258px;top:77.7px;height:10px;line-height:10px;">13531680034</div>
<div class="t s m" style="left:332px;top:77.7px;height:10px;line-height:10px;"><b style="width:4.5px;transform:scaleX(.72)">K</b><b style="width:4.5px">k</b>31680034</div>
<div class="t s" style="left:407px;top:78.6px;height:10px;line-height:10px;">登录失败</div>
<div class="t s m" style="left:542px;top:77.7px;height:10px;line-height:10px;">183<b style="width:4.5px">.</b>134<b style="width:4.5px">.</b>76<b style="width:4.5px">.</b>42<b style="width:4.5px">.</b><b style="width:4.5px">.</b><b style="width:4.5px">.</b></div>
<div class="t s m" style="left:220px;top:89.7px;height:10px;line-height:10px;">5</div>
<div class="t s m" style="left:258px;top:89.7px;height:10px;line-height:10px;">13531773585</div>
<div class="t s m" style="left:332px;top:89.7px;height:10px;line-height:10px;"><b style="width:4.5px;transform:scaleX(.72)">m</b><b style="width:4.5px">x</b><b style="width:4.5px">j</b>24<b style="width:4.5px;transform:scaleX(.72)">w</b><b style="width:4.5px">y</b></div>
<div class="t s" style="left:407px;top:90.6px;height:10px;line-height:10px;">登录成功</div>
<div class="t s m" style="left:482px;top:89.7px;height:10px;line-height:10px;">25</div>
<div class="t s m" style="left:542px;top:89.7px;height:10px;line-height:10px;">183<b style="width:4.5px">.</b>134<b style="width:4.5px">.</b>78<b style="width:4.5px">.</b>39<b style="width:4.5px">.</b><b style="width:4.5px">.</b><b style="width:4.5px">.</b></div>
<div class="t s m" style="left:625px;top:89.7px;height:10px;line-height:10px;">1</div>
<div class="t s m" style="left:220px;top:101.7px;height:10px;line-height:10px;">6</div>
<div class="t s m" style="left:258px;top:101.7px;height:10px;line-height:10px;">13531297015</div>
<div class="t s m" style="left:332px;top:101.7px;height:10px;line-height:10px;">73467346</div>
<div class="t s" style="left:407px;top:102.6px;height:10px;line-height:10px;">登录成功</div>
<div class="t s m" style="left:482px;top:101.7px;height:10px;line-height:10px;">28</div>
<div class="t s m" style="left:542px;top:101.7px;height:10px;line-height:10px;">183<b style="width:4.5px">.</b>134<b style="width:4.5px">.</b>78<b style="width:4.5px">.</b>44<b style="width:4.5px">.</b><b style="width:4.5px">.</b><b style="width:4.5px">.</b></div>
<div class="t s m" style="left:220px;top:113.7px;height:10px;line-height:10px;">7</div>
<div class="t s m" style="left:258px;top:113.7px;height:10px;line-height:10px;">13531881122</div>
<div class="t s m" style="left:332px;top:113.7px;height:10px;line-height:10px;"><b style="width:4.5px">a</b><b style="width:4.5px">a</b>8823525</div>
<div class="t s" style="left:407px;top:114.6px;height:10px;line-height:10px;">登录成功</div>
<div class="t s m" style="left:482px;top:113.7px;height:10px;line-height:10px;">30</div>
<div class="t s m" style="left:542px;top:113.7px;height:10px;line-height:10px;">183<b style="width:4.5px">.</b>134<b style="width:4.5px">.</b>76<b style="width:4.5px">.</b>42<b style="width:4.5px">.</b><b style="width:4.5px">.</b><b style="width:4.5px">.</b></div>
<div class="t s m" style="left:625px;top:113.7px;height:10px;line-height:10px;">3</div>
<div class="t s m" style="left:220px;top:125.7px;height:10px;line-height:10px;">8</div>
<div class="t s m" style="left:258px;top:125.7px;height:10px;line-height:10px;">13532254549</div>
<div class="t s m" style="left:332px;top:125.7px;height:10px;line-height:10px;">880727</div>
<div class="t s" style="left:407px;top:126.6px;height:10px;line-height:10px;">登录成功</div>
<div class="t s m" style="left:482px;top:125.7px;height:10px;line-height:10px;">30</div>
<div class="t s m" style="left:542px;top:125.7px;height:10px;line-height:10px;">183<b style="width:4.5px">.</b>134<b style="width:4.5px">.</b>76<b style="width:4.5px">.</b>42<b style="width:4.5px">.</b><b style="width:4.5px">.</b><b style="width:4.5px">.</b></div>
<div class="t s m" style="left:625px;top:125.7px;height:10px;line-height:10px;">3</div>
<div class="t s m" style="left:220px;top:137.6px;height:10px;line-height:10px;">9</div>
<div class="t s m" style="left:258px;top:137.6px;height:10px;line-height:10px;">13533033366</div>
<div class="t s m" style="left:332px;top:137.6px;height:10px;line-height:10px;">520<b style="width:4.5px">k</b><b style="width:4.5px">i</b><b style="width:4.5px">n</b><b style="width:4.5px">g</b></div>
<div class="t s m" style="left:220px;top:149.6px;height:10px;line-height:10px;">10</div>
<div class="t s m" style="left:258px;top:149.6px;height:10px;line-height:10px;">13533038067</div>
<div class="t s m" style="left:332px;top:149.6px;height:10px;line-height:10px;"><b style="width:4.5px">a</b><b style="width:4.5px">a</b><b style="width:4.5px">a</b>7550553</div>
<div class="t s m" style="left:220px;top:161.6px;height:10px;line-height:10px;">11</div>
<div class="t s m" style="left:258px;top:161.6px;height:10px;line-height:10px;">13533199204</div>
<div class="t s m" style="left:332px;top:161.6px;height:10px;line-height:10px;">5433857728</div>
<div class="t s m" style="left:220px;top:173.6px;height:10px;line-height:10px;">12</div>
<div class="t s m" style="left:258px;top:173.6px;height:10px;line-height:10px;">13533607668</div>
<div class="t s m" style="left:332px;top:173.6px;height:10px;line-height:10px;"><b style="width:4.5px">h</b><b style="width:4.5px">a</b><b style="width:4.5px">h</b><b style="width:4.5px">a</b>123</div>
<div class="t s m" style="left:220px;top:185.6px;height:10px;line-height:10px;">13</div>
<div class="t s m" style="left:258px;top:185.6px;height:10px;line-height:10px;">13534066969</div>
<div class="t s m" style="left:332px;top:185.6px;height:10px;line-height:10px;">28773619</div>
<div class="t s m" style="left:220px;top:197.5px;height:10px;line-height:10px;">14</div>
<div class="t s m" style="left:258px;top:197.5px;height:10px;line-height:10px;">13534199844</div>
<div class="t s m" style="left:332px;top:197.5px;height:10px;line-height:10px;">5841314920</div>
<div style="left:217px;top:209px;width:451px;height:2px;overflow:hidden"><div class="t s m" style="left:4px;top:-1px">15</div><div class="t s m" style="left:42px;top:-1px">13534232660</div><div class="t s m" style="left:116px;top:-1px">qwe</div></div>
<div class="" style="left:668px;top:23px;width:13px;height:188px;background:#f1f1f1;border-left:1px solid #e4e4e4"></div>
<svg style="left:672px;top:28px" width="6" height="4" viewBox="0 0 8 5"><path d="M0 4.500L4 0l4 4.500z" fill="#6a707a"/></svg>
<svg style="left:672px;top:204px" width="6" height="4" viewBox="0 0 8 5"><path d="M0 .5L4 5 8 .5z" fill="#6a707a"/></svg>
<div class="" style="left:669px;top:35px;width:12px;height:12px;background:linear-gradient(90deg,#f3f3f3,#dcdcdc);border:1px solid #9da3ab;border-radius:2px"></div>
<div class="t s" style="left:220px;top:215.0px;height:10px;line-height:10px;color:#333">运行日志</div>
<div class="" style="left:294px;top:217px;width:10px;height:10px;background:linear-gradient(135deg,#d8d8d8,#f6f6f6);border:1px solid #b4b8bd"></div>
<div class="t s" style="left:306px;top:218.0px;height:10px;line-height:10px;color:#333">保存运行日志</div>
<div class="" style="left:219px;top:231px;width:1px;height:1px;"></div>
<div class="" style="left:364px;top:220px;width:311px;height:1px;background:#dedede"></div>
<div style="left:218px;top:231px;width:452px;height:121px;background:#f1f1f1;border:2px solid #8f9296;border-right-color:#c9ccd0;border-bottom-color:#c9ccd0;overflow:hidden">
<div class="t lg" style="left:0px;top:-6.2px;color:#4a8f45"><span class="i lm">11<b style="width:6px">:</b>42<b style="width:6px">:</b>36<b style="width:6px">&nbsp;</b></span>当前手机，<span class="i lm">18709668369</span>发送成功</div>
<div class="t lg" style="left:0px;top:7.3px;color:#e0542e"><span class="i lm">11<b style="width:6px">:</b>42<b style="width:6px">:</b>37<b style="width:6px">&nbsp;</b></span>有验证码，正在识别<span class="i lm"><b style="width:6px">.</b><b style="width:6px">.</b><b style="width:6px">.</b><b style="width:6px">.</b><b style="width:6px">.</b><b style="width:6px">.</b></span></div>
<div class="t lg" style="left:0px;top:20.8px;color:#4a8f45"><span class="i lm">11<b style="width:6px">:</b>42<b style="width:6px">:</b>38<b style="width:6px">&nbsp;</b></span>当前手机，<span class="i lm">18709668369</span>发送成功</div>
<div class="t lg" style="left:0px;top:34.3px;color:#4a8f45"><span class="i lm">11<b style="width:6px">:</b>42<b style="width:6px">:</b>39<b style="width:6px">&nbsp;</b></span>当前手机，<span class="i lm">18709668369</span>发送成功</div>
<div class="t lg" style="left:0px;top:47.8px;color:#4a8f45"><span class="i lm">11<b style="width:6px">:</b>42<b style="width:6px">:</b>41<b style="width:6px">&nbsp;</b></span>当前手机，<span class="i lm">18709668369</span>发送成功</div>
<div class="t lg" style="left:0px;top:61.3px;color:#e0542e"><span class="i lm">11<b style="width:6px">:</b>42<b style="width:6px">:</b>41<b style="width:6px">&nbsp;</b></span>验证码识别<span class="i lm"><b style="width:6px;transform:scaleX(.72)">O</b><b style="width:6px;transform:scaleX(.72)">K</b><b style="width:6px">.</b><b style="width:6px">.</b><b style="width:6px">.</b><b style="width:6px">.</b><b style="width:6px">.</b><b style="width:6px">.</b></span></div>
<div class="t lg" style="left:0px;top:74.8px;color:#222"><span class="i lm">11<b style="width:6px">:</b>42<b style="width:6px">:</b>42<b style="width:6px">&nbsp;</b></span>验证码识别返回<span class="i lm"><b style="width:6px">{</b><b style="width:6px">&nbsp;</b><b style="width:6px">"</b><b style="width:6px">c</b><b style="width:6px">o</b><b style="width:6px">d</b><b style="width:6px">e</b><b style="width:6px">"</b><b style="width:6px">:</b><b style="width:6px">&nbsp;</b><b style="width:6px">"</b><b style="width:6px;transform:scaleX(.72)">S</b><b style="width:6px">_</b><b style="width:6px;transform:scaleX(.72)">O</b><b style="width:6px;transform:scaleX(.72)">K</b><b style="width:6px">"</b><b style="width:6px">,</b><b style="width:6px">&nbsp;</b><b style="width:6px">"</b><b style="width:6px">s</b><b style="width:6px">u</b><b style="width:6px;transform:scaleX(.72)">m</b><b style="width:6px;transform:scaleX(.72)">m</b><b style="width:6px">a</b><b style="width:6px">r</b><b style="width:6px">y</b><b style="width:6px">"</b><b style="width:6px">:</b><b style="width:6px">&nbsp;</b><b style="width:6px">"</b><b style="width:6px">"</b><b style="width:6px">}</b></span></div>
<div class="t lg" style="left:0px;top:88.3px;color:#222"><span class="i lm">11<b style="width:6px">:</b>42<b style="width:6px">:</b>42<b style="width:6px">&nbsp;</b></span>输入验证码后结果<span class="i lm"><b style="width:6px">{</b><b style="width:6px">&nbsp;</b><b style="width:6px">"</b><b style="width:6px">c</b><b style="width:6px">o</b><b style="width:6px">d</b><b style="width:6px">e</b><b style="width:6px">"</b><b style="width:6px">:</b><b style="width:6px">&nbsp;</b><b style="width:6px">"</b><b style="width:6px;transform:scaleX(.72)">S</b><b style="width:6px">_</b><b style="width:6px;transform:scaleX(.72)">O</b><b style="width:6px;transform:scaleX(.72)">K</b><b style="width:6px">"</b><b style="width:6px">,</b><b style="width:6px">&nbsp;</b><b style="width:6px">"</b><b style="width:6px">s</b><b style="width:6px">u</b><b style="width:6px;transform:scaleX(.72)">m</b><b style="width:6px;transform:scaleX(.72)">m</b><b style="width:6px">a</b><b style="width:6px">r</b><b style="width:6px">y</b><b style="width:6px">"</b><b style="width:6px">:</b><b style="width:6px">"</b></span>您的短信发送成功！<span class="i lm"><b style="width:6px">"</b><b style="width:6px">,</b></span></div>
<div class="t lg" style="left:0px;top:101.8px;color:#4a8f45"><span class="i lm">11<b style="width:6px">:</b>42<b style="width:6px">:</b>42<b style="width:6px">&nbsp;</b></span>当前手机，<span class="i lm">18709668369</span>发送成功</div>
</div>
<div class="gb" style="left:212px;top:362px;width:470px;height:118px;"></div>
<div class="" style="left:423px;top:358px;width:44px;height:10px;background:#f0f0f0"></div>
<div class="t s" style="left:426px;top:358.3px;height:10px;line-height:10px;color:#222">配置中心</div>
<div class="t s" style="left:216px;top:374.2px;height:10px;line-height:10px;color:#222">单号发送数</div>
<div class="inp" style="left:265px;top:370px;width:34px;height:17px;"></div>
<div class="t s m" style="left:276px;top:374.1px;height:10px;line-height:10px;">20</div>
<div class="t s" style="left:311px;top:374.2px;height:10px;line-height:10px;color:#222">发送延迟<span class="i m"><b style="width:4.5px">/</b><b style="width:4.5px;transform:scaleX(.72)">S</b></span></div>
<div class="inp" style="left:360px;top:370px;width:34px;height:17px;"></div>
<div class="t s m" style="left:375px;top:374.1px;height:10px;line-height:10px;">2</div>
<div class="" style="left:479px;top:373px;width:9px;height:9px;background:linear-gradient(135deg,#d8d8d8,#f6f6f6);border:1px solid #b4b8bd"></div>
<div class="t s" style="left:490px;top:374.0px;height:10px;line-height:10px;color:#222">启用内容后随机生成</div>
<div class="inp" style="left:574px;top:370px;width:18px;height:17px;"></div>
<div class="t s m" style="left:580px;top:374.1px;height:10px;line-height:10px;">5</div>
<div class="t s" style="left:592px;top:374.0px;height:10px;line-height:10px;color:#222">个字母</div>
<div class="gb" style="left:216px;top:402px;width:455px;height:75px;"></div>
<div class="" style="left:382px;top:396px;width:126px;height:9px;background:#f0f0f0"></div>
<div class="t " style="left:385px;top:394.0px;height:12px;line-height:12px;font-family:'Noto Serif CJK SC',serif;font-weight:900;font-size:10px;color:#111;letter-spacing:1.100px;word-spacing:1px">信内容配置  支持一行一</div>
<div class="" style="left:222px;top:406px;width:443px;height:65px;background:#fff;border:1px solid #e0e3e8"></div>
<div class="t s" style="left:225px;top:406.8px;height:10px;line-height:10px;color:#333">你好，您有份福利请注意查收下维<span class="i m"><b style="width:4.5px">x</b><b style="width:4.5px">x</b></span></div>
<div class="" style="left:653px;top:407px;width:12px;height:64px;background:#f4f4f4"></div>
<svg style="left:655px;top:411px" width="8" height="5" viewBox="0 0 8 5"><path d="M0 4.500L4 0l4 4.500z" fill="#9aa0a8"/></svg>
<div class="t s" style="left:175px;top:488.5px;height:10px;line-height:10px;color:#222">全局配置</div>
<div class="t s" style="left:359px;top:485.0px;height:10px;line-height:10px;color:#222">推荐用代理</div>
<div class="t s m" style="left:1px;top:497.1px;height:10px;line-height:10px;color:#444"><b style="width:4.5px;transform:scaleX(.72)">A</b><b style="width:4.5px;transform:scaleX(.72)">P</b><b style="width:4.5px;transform:scaleX(.72)">I</b></div>
<div class="inp" style="left:19px;top:499.5px;width:322px;height:15px;"></div>
<div class="t s m" style="left:22px;top:501.6px;height:10px;line-height:10px;color:#333">2<b style="width:4.5px;transform:scaleX(.72)">C</b>9<b style="width:4.5px;transform:scaleX(.62)">&amp;</b><b style="width:4.5px">n</b><b style="width:4.5px">u</b><b style="width:4.5px;transform:scaleX(.72)">m</b><b style="width:4.5px">=</b>1<b style="width:4.5px;transform:scaleX(.62)">&amp;</b><b style="width:4.5px">t</b><b style="width:4.5px">i</b><b style="width:4.5px;transform:scaleX(.72)">m</b><b style="width:4.5px">e</b><b style="width:4.5px">=</b>6<b style="width:4.5px;transform:scaleX(.62)">&amp;</b><b style="width:4.5px">p</b><b style="width:4.5px">l</b><b style="width:4.5px">a</b><b style="width:4.5px">t</b><b style="width:4.5px">=</b>1<b style="width:4.5px;transform:scaleX(.62)">&amp;</b><b style="width:4.5px">r</b><b style="width:4.5px">e</b><b style="width:4.5px">=</b>0<b style="width:4.5px;transform:scaleX(.62)">&amp;</b><b style="width:4.5px">t</b><b style="width:4.5px">y</b><b style="width:4.5px">p</b><b style="width:4.5px">e</b><b style="width:4.5px">=</b>7<b style="width:4.5px;transform:scaleX(.62)">&amp;</b><b style="width:4.5px">s</b><b style="width:4.5px">o</b><b style="width:4.5px">=</b>1<b style="width:4.5px;transform:scaleX(.62)">&amp;</b><b style="width:4.5px">g</b><b style="width:4.5px">r</b><b style="width:4.5px">o</b><b style="width:4.5px">u</b><b style="width:4.5px">p</b><b style="width:4.5px">=</b>51<b style="width:4.5px;transform:scaleX(.62)">&amp;</b><b style="width:4.5px">o</b><b style="width:4.5px;transform:scaleX(.72)">w</b><b style="width:4.5px">=</b>1<b style="width:4.5px;transform:scaleX(.62)">&amp;</b><b style="width:4.5px">s</b><b style="width:4.5px">p</b><b style="width:4.5px">l</b><b style="width:4.5px">=</b>1<b style="width:4.5px;transform:scaleX(.62)">&amp;</b><b style="width:4.5px">a</b><b style="width:4.5px">d</b><b style="width:4.5px">d</b><b style="width:4.5px">r</b><b style="width:4.5px">=</b><b style="width:4.5px;transform:scaleX(.62)">&amp;</b><b style="width:4.5px">d</b><b style="width:4.5px">b</b><b style="width:4.5px">=</b>1</div>
<div class="" style="left:346px;top:501px;width:9px;height:10px;background:#fdfdfd;border:1px solid #8e97a3"></div>
<svg style="left:347px;top:502px" width="8" height="8" viewBox="0 0 8 8"><path d="M1.500 4l2 2.500L6.500 1" fill="none" stroke="#4a5fa0" stroke-width="1.300"/></svg>
<div class="t s" style="left:358px;top:502.5px;height:10px;line-height:10px;color:#222">启动代理</div>
<div class="gb" style="left:687px;top:25px;width:137px;height:400px;"></div>
<div class="gb" style="left:693px;top:34px;width:126px;height:113px;"></div>
<div class="" style="left:713px;top:29px;width:66px;height:10px;background:#f0f0f0"></div>
<div class="t s" style="left:717px;top:29.0px;height:10px;line-height:10px;color:#222">运行状态信息：</div>
<div class="t s" style="left:696px;top:49.5px;height:10px;line-height:10px;color:#222">任务分发计次：<span class="i m">8</span></div>
<div class="t s" style="left:696px;top:77.0px;height:10px;line-height:10px;color:#222">已提取代理：<span class="i m">67<b style="width:4.5px">/</b><b style="width:4.5px;transform:scaleX(.72)">G</b><b style="width:4.5px">e</b><b style="width:4.5px">t</b><b style="width:4.5px">.</b><b style="width:4.5px">.</b></span></div>
<div class="t s" style="left:696px;top:94.5px;height:10px;line-height:10px;color:#222">正在验证代理：<span class="i m">0</span></div>
<div class="t s" style="left:696px;top:112.5px;height:10px;line-height:10px;color:#222">验证成功代理：<span class="i m">0</span></div>
<div class="t s" style="left:696px;top:130.5px;height:10px;line-height:10px;color:#222">当前剩余代理：<span class="i m">16</span></div>
<div class="gb" style="left:695px;top:153px;width:123px;height:83px;"></div>
<div class="" style="left:712px;top:148px;width:64px;height:10px;background:#f0f0f0"></div>
<div class="t s" style="left:715px;top:148.0px;height:10px;line-height:10px;color:#222">线程状态信息：</div>
<div class="t s" style="left:703px;top:163.0px;height:10px;line-height:10px;color:#222">线程池容量：<span class="i m">5</span></div>
<div class="t s" style="left:703px;top:181.0px;height:10px;line-height:10px;color:#222">执行线程数：<span class="i m">5</span></div>
<div class="t s" style="left:703px;top:199.0px;height:10px;line-height:10px;color:#222">空闲线程数：<span class="i m">0</span></div>
<div class="t s" style="left:703px;top:217.0px;height:10px;line-height:10px;color:#222">队列任务数：<span class="i m">47</span></div>
<div class="gb" style="left:693px;top:242px;width:126px;height:66px;"></div>
<div class="t s" style="left:699px;top:258.0px;height:10px;line-height:10px;color:#222">线程数：</div>
<div class="inp" style="left:736px;top:256px;width:40px;height:13px;"></div>
<div class="t s m" style="left:753px;top:257.1px;height:10px;line-height:10px;">5</div>
<div class="" style="left:697px;top:278px;width:58px;height:22px;border:1px solid #8e959e;border-radius:3px;background:linear-gradient(180deg,#f4f4f4,#ececec 50%,#dedede 51%,#d2d2d2)"></div>
<div class="t s" style="left:717px;top:284.0px;height:10px;line-height:10px;color:#222">停止</div>
<div class="t s" style="left:780px;top:284.0px;height:10px;line-height:10px;color:#1f5fd0">暂停</div>
<div class="t s" style="left:693px;top:315.5px;height:10px;line-height:10px;color:#222">完成进度：<span class="i m">13<b style="width:4.5px">/</b>267</span></div>
<div class="t s" style="left:693px;top:338.0px;height:10px;line-height:10px;color:#222">当前时速：<span class="i m">549</span></div>
<div class="t s" style="left:693px;top:359.0px;height:10px;line-height:10px;color:#222">已耗时：<span class="i m">85<b style="width:4.5px">.</b>177</span>秒</div>
<div class="" style="left:692px;top:376px;width:127px;height:16px;background:linear-gradient(180deg,#f6f6f6 0,#e4e6e2 30%,#c9cdc8 36%,#d0d4cf 100%);border:1px solid #a9aeb3;border-radius:2px"></div>
<div class="" style="left:693px;top:377px;width:6px;height:14px;background:linear-gradient(180deg,#b5d8ac 0,#7fb873 30%,#5a9a4e 36%,#63a357 100%)"></div>
<div class="" style="left:692px;top:399px;width:131px;height:1px;background:#dcdcdc"></div>
<div class="" style="left:723px;top:405px;width:68px;height:10px;background:#f0f0f0"></div>
<div class="t s" style="left:726px;top:405.5px;height:10px;line-height:10px;color:#222">超级鹰识别配置</div>
<div class="t s" style="left:694px;top:421.0px;height:10px;line-height:10px;color:#222">账号</div>
<div class="inp" style="left:719px;top:418px;width:100px;height:16px;"></div>
<div class="t s m" style="left:744px;top:420.1px;height:10px;line-height:10px;color:#333"><b style="width:4.5px">a</b><b style="width:4.5px">a</b>804520209</div>
</div>
<div id="bandi" style="left:831px;top:491px;width:464px;height:286px;background:#3a4450;overflow:hidden;box-shadow:0 0 2px rgba(0,0,0,.5)">
<div style="left:0px;top:0px;width:464px;height:25px;background:#303a45"></div>
<div class="t" style="left:8px;top:7.8px;height:12px;line-height:12px;font-family:'Liberation Sans','Noto Sans CJK SC',sans-serif;font-size:9.500px;font-weight:bold;letter-spacing:0;transform:scaleX(1.245);transform-origin:0 50%"><span class="i" style="color:#e9e9e9">BANDI</span><span class="i" style="color:#e24a3b">CAM</span></div>
<div style="left:76px;top:7.5px;width:41px;height:12px;background:#1f2630;border-radius:6px"></div>
<div class="t" style="left:80px;top:7.5px;height:12px;line-height:12px;font-family:'Liberation Sans','Noto Sans CJK SC',sans-serif;font-size:8.500px;color:#c9ced4">班迪录屏</div>
<div style="left:125px;top:8px;width:23px;height:11px;background:#1c222b"></div>
<div class="t" style="left:129.5px;top:7.5px;height:12px;line-height:12px;font-family:'Liberation Sans','Noto Sans CJK SC',sans-serif;font-size:8px;font-weight:bold;color:#f3c9a8;text-shadow:0 0 1px #e0402a,0 0 2px #e0402a">VIP</div>
<div style="left:151.5px;top:8px;width:28px;height:11px;background:#28303b"></div>
<div class="t" style="left:155.5px;top:7.5px;height:12px;line-height:12px;font-family:'Liberation Sans','Noto Sans CJK SC',sans-serif;font-size:6px;color:#aeb6bf">ADMIN</div>
<svg style="left:319px;top:4.5px" width="12" height="11" viewBox="0 0 12 11"><path d="M1 2h4l1 1.500h5V10H1z" fill="#8b949e"/><path d="M2 5h9.500L10 10H1z" fill="#6f7983"/></svg>
<svg style="left:343px;top:4.5px" width="11" height="11" viewBox="0 0 11 11"><circle cx="5.500" cy="5.500" r="5" fill="#8b949e"/><path d="M5.500 2.500v3.200h2.800" fill="none" stroke="#303a45" stroke-width="1.200"/></svg>
<div class="t" style="left:370px;top:4.8px;height:12px;line-height:12px;font-family:'Liberation Sans','Noto Sans CJK SC',sans-serif;font-size:11px;color:#8b949e;font-weight:bold">?</div>
<div style="left:399px;top:12px;width:3px;height:1px;background:#8b949e"></div>
<div style="left:419px;top:12px;width:10px;height:1.5px;background:#9aa2ab"></div>
<svg style="left:445px;top:5.300000000000011px" width="10" height="10" viewBox="0 0 10 10"><path d="M1 1l8 8M9 1l-8 8" stroke="#9aa2ab" stroke-width="1.300"/></svg>
<div style="left:0px;top:25px;width:464px;height:41px;background:#252c36"></div>
<div style="left:0px;top:25px;width:54px;height:42px;background:#2f8be8"></div>
<div style="left:54px;top:25px;width:1px;height:42px;background:#1f6fc4"></div>
<div style="left:55px;top:25px;width:11px;height:42px;background:#2f8be8"></div>
<svg style="left:17.5px;top:37.5px" width="22" height="18" viewBox="0 0 22 18"><rect x="1.500" y="1.500" width="19" height="12" rx="1" fill="none" stroke="#e8f1fb" stroke-width="1.800"/><path d="M8 17.500l3-3.500 3 3.500z" fill="#e8f1fb"/></svg>
<svg style="left:57px;top:43px" width="7" height="5" viewBox="0 0 7 5"><path d="M1 1l2.500 2.500L6 1" fill="none" stroke="#d6e7fb" stroke-width="1.300"/></svg>
<div class="t" style="left:82px;top:32.0px;height:18px;line-height:18px;font-family:'Liberation Sans','Noto Sans CJK SC',sans-serif;font-family:'DejaVu Sans Mono','Liberation Mono',monospace;font-size:16.500px;color:#3b8fe6;letter-spacing:0.150px;font-weight:normal;transform:scaleY(1.080)">00:00:35</div>
<div class="t" style="left:101px;top:51.3px;height:9px;line-height:9px;font-family:'Liberation Sans','Noto Sans CJK SC',sans-serif;font-size:8.200px;color:#7e8791;letter-spacing:-0.100px">4.8MB / 179.9GB</div>
<div style="left:179px;top:29px;width:45px;height:33px;background:#15181c"></div>
<svg style="left:191px;top:35px" width="21" height="21" viewBox="0 0 21 21"><circle cx="10.500" cy="8" r="6" fill="none" stroke="#55606c" stroke-width="2.200"/><circle cx="10.500" cy="8" r="2.200" fill="#55606c"/><path d="M5 19c1-4 3-5 5.500-5s4.500 1 5.500 5z" fill="#55606c"/></svg>
<svg style="left:233px;top:37px" width="18" height="16" viewBox="0 0 18 16"><path d="M1 5.500h3.500L9 1.500v13L4.500 10.500H1z" fill="#c3c9d0"/><path d="M11 4.500a5 5 0 0 1 0 7M13.200 2.500a8 8 0 0 1 0 11" fill="none" stroke="#c3c9d0" stroke-width="1.400"/></svg>
<div style="left:257px;top:35px;width:1px;height:21px;background:#38424e"></div>
<svg style="left:266px;top:36px" width="15" height="18" viewBox="0 0 15 18"><rect x="4.500" y="1" width="6" height="10" rx="3" fill="#aeb5bd"/><path d="M2 8.500a5.500 5.500 0 0 0 11 0" fill="none" stroke="#aeb5bd" stroke-width="1.400"/><path d="M7.500 14v2.500M4 17h7" stroke="#aeb5bd" stroke-width="1.400"/></svg>
<div style="left:290px;top:35px;width:1px;height:21px;background:#38424e"></div>
<svg style="left:299px;top:36px" width="17" height="18" viewBox="0 0 17 18"><circle cx="8" cy="8" r="6.300" fill="none" stroke="#aeb5bd" stroke-width="1.500"/><circle cx="8" cy="8" r="3.300" fill="none" stroke="#aeb5bd" stroke-width="1.300"/><path d="M8 7.500l1 9.500 2-2.800 3.500-.2z" fill="#d5dae0" stroke="#252c36" stroke-width=".6"/></svg>
<div style="left:322px;top:35px;width:1px;height:21px;background:#38424e"></div>
<div class="t" style="left:332px;top:36.0px;height:18px;line-height:18px;font-family:'Liberation Sans','Noto Sans CJK SC',sans-serif;font-family:'Liberation Serif',serif;font-size:17px;font-weight:bold;color:#4a5563">T</div>
<div style="left:356px;top:35px;width:1px;height:21px;background:#38424e"></div>
<div style="left:368px;top:39px;width:3.3px;height:12.5px;background:#f2f2f2"></div>
<div style="left:375.5px;top:39px;width:3.3px;height:12.5px;background:#f2f2f2"></div>
<svg style="left:365px;top:45px" width="10" height="15" viewBox="0 0 10 15"><path d="M1 1v11l2.800-2.500L6 14l1.800-.8-2-4.300H9z" fill="#fff" stroke="#222" stroke-width=".8"/></svg>
<div style="left:387px;top:21px;width:50px;height:50px;background:#3a4450;border-radius:25px"></div>
<div style="left:390.70000000000005px;top:24.700000000000045px;width:42px;height:42px;background:radial-gradient(circle at 50% 40%,#f2674b,#e8553b 70%,#e04a33);border-radius:21px"></div>
<div style="left:405.29999999999995px;top:39.5px;width:12.5px;height:12px;background:#f6f1ee;border-radius:1px"></div>
<svg style="left:441px;top:37px" width="18" height="15" viewBox="0 0 18 15"><path d="M1 3.500h3.500L6 1.500h6l1.500 2H17V14H1z" fill="#dfe3e7"/><circle cx="9" cy="8.500" r="3.600" fill="#252c36"/><circle cx="9" cy="8.500" r="2.100" fill="#dfe3e7"/></svg>
<svg style="left:9px;top:73px" width="11" height="12" viewBox="0 0 11 12"><rect x="1" y="1" width="9" height="10" fill="none" stroke="#aab2bb" stroke-width="1" stroke-dasharray="2.500 1.500"/></svg>
<div class="t" style="left:27px;top:72.5px;height:12px;line-height:12px;font-family:'Liberation Sans','Noto Sans CJK SC',sans-serif;font-size:9.700px;color:#d9dde2;letter-spacing:-0.120px">1920x1080 - (0, 0), (1920, 1080) - 显示器 1</div>
<svg style="left:445px;top:75px" width="11" height="7" viewBox="0 0 11 7"><path d="M1 6l4.500-4.500L10 6" fill="none" stroke="#aab2bb" stroke-width="1.300"/></svg>
<div style="left:9px;top:90.5px;width:104px;height:200px;background:#262d37"></div>
<div style="left:113px;top:90.5px;width:344px;height:200px;background:#333d48;border-top:1px solid #46505c;border-right:1px solid #46505c"></div>
<div style="left:9px;top:166px;width:2px;height:36px;background:#2f7fd6"></div>
<div class="t" style="left:36px;top:103.5px;height:12px;line-height:12px;font-family:'Liberation Sans','Noto Sans CJK SC',sans-serif;font-size:8.800px;color:#8e969f">首页</div>
<svg style="left:18px;top:103.0px" width="13" height="13" viewBox="0 0 13 13"><path d="M6.500 1L0.500 6.500h1.800V12h3V8.500h2.400V12h3V6.500h1.800z" fill="#8e969f"/></svg>
<div class="t" style="left:36px;top:140.5px;height:12px;line-height:12px;font-family:'Liberation Sans','Noto Sans CJK SC',sans-serif;font-size:8.800px;color:#8e969f">常规</div>
<svg style="left:18px;top:140.0px" width="13" height="13" viewBox="0 0 13 13"><circle cx="6.500" cy="6.500" r="3.600" fill="none" stroke="#8e969f" stroke-width="2.200"/><path d="M6.500 0v13M0 6.500h13M1.900 1.900l9.200 9.200M11.100 1.900l-9.200 9.200" stroke="#8e969f" stroke-width="1.700"/><circle cx="6.500" cy="6.500" r="2.300" fill="#262d37"/></svg>
<div class="t" style="left:36px;top:178.0px;height:12px;line-height:12px;font-family:'Liberation Sans','Noto Sans CJK SC',sans-serif;font-size:8.800px;color:#c8cdd3">录像</div>
<svg style="left:18px;top:177.5px" width="14" height="14" viewBox="0 0 14 14"><rect x="1" y="1.500" width="9.500" height="8" fill="none" stroke="#e1e5e9" stroke-width="1.300"/><path d="M4.300 3.500l3 2-3 2z" fill="#e1e5e9"/><circle cx="10.300" cy="10.300" r="3" fill="#262d37" stroke="#e1e5e9" stroke-width="1.500"/></svg>
<div class="t" style="left:36px;top:216.0px;height:12px;line-height:12px;font-family:'Liberation Sans','Noto Sans CJK SC',sans-serif;font-size:8.800px;color:#8e969f">截图</div>
<svg style="left:18px;top:215.5px" width="14" height="14" viewBox="0 0 14 14"><rect x="1" y="1.500" width="9.500" height="8" fill="none" stroke="#6f7882" stroke-width="1.200"/><path d="M2.500 8l2.500-3 2 2" fill="none" stroke="#6f7882" stroke-width="1"/><circle cx="10.300" cy="10.300" r="3" fill="#262d37" stroke="#6f7882" stroke-width="1.400"/></svg>
<div class="t" style="left:36px;top:253.0px;height:12px;line-height:12px;font-family:'Liberation Sans','Noto Sans CJK SC',sans-serif;font-size:8.800px;color:#8e969f">关于</div>
<svg style="left:18px;top:252.5px" width="13" height="13" viewBox="0 0 13 13"><circle cx="6.500" cy="6.500" r="6" fill="#8e969f"/><circle cx="6.500" cy="3.600" r="1.200" fill="#262d37"/><path d="M4.800 5.800h2.800v4.500M4.800 10.300h3.600" stroke="#262d37" stroke-width="1.300" fill="none"/></svg>
<div class="t" style="left:128px;top:110.0px;height:12px;line-height:12px;font-family:'Liberation Sans','Noto Sans CJK SC',sans-serif;font-size:8.800px;color:#e3e6ea;font-weight:bold">录制</div>
<div style="left:128px;top:126px;width:313px;height:1px;background:#4a5561"></div>
<div style="left:128px;top:135px;width:12px;height:12px;border:1px solid #8c949d"></div>
<div class="t" style="left:145px;top:135.0px;height:12px;line-height:12px;font-family:'Liberation Sans','Noto Sans CJK SC',sans-serif;font-size:8.800px;color:#c3c8ce">录制/停止 热键</div>
<div style="left:128px;top:155px;width:12px;height:12px;border:1px solid #8c949d"></div>
<div class="t" style="left:145px;top:155.0px;height:12px;line-height:12px;font-family:'Liberation Sans','Noto Sans CJK SC',sans-serif;font-size:8.800px;color:#c3c8ce">暂停 热键</div>
<div style="left:128px;top:174.5px;width:12px;height:12px;border:1px solid #8c949d"></div>
<svg style="left:129px;top:175.5px" width="10" height="10" viewBox="0 0 10 10"><path d="M1.500 5l2.800 3L8.500 1.500" fill="none" stroke="#d4d9de" stroke-width="1.200"/></svg>
<div class="t" style="left:145px;top:174.5px;height:12px;line-height:12px;font-family:'Liberation Sans','Noto Sans CJK SC',sans-serif;font-size:8.800px;color:#c3c8ce">显示鼠标指针</div>
<div style="left:128px;top:193.5px;width:12px;height:12px;border:1px solid #8c949d"></div>
<svg style="left:129px;top:194.5px" width="10" height="10" viewBox="0 0 10 10"><path d="M1.500 5l2.800 3L8.500 1.500" fill="none" stroke="#d4d9de" stroke-width="1.200"/></svg>
<div class="t" style="left:145px;top:193.5px;height:12px;line-height:12px;font-family:'Liberation Sans','Noto Sans CJK SC',sans-serif;font-size:8.800px;color:#c3c8ce">添加鼠标点击效果</div>
<div style="left:128px;top:212px;width:12px;height:12px;border:1px solid #8c949d"></div>
<div class="t" style="left:145px;top:212.0px;height:12px;line-height:12px;font-family:'Liberation Sans','Noto Sans CJK SC',sans-serif;font-size:8.800px;color:#c3c8ce">添加网络摄像头叠加画面</div>
<div style="left:314px;top:132px;width:127px;height:19px;background:#3e4956"></div>
<div class="t" style="left:318px;top:135.5px;height:12px;line-height:12px;font-family:'Liberation Sans','Noto Sans CJK SC',sans-serif;font-size:8px;color:#566270">F12</div>
<div style="left:314px;top:152px;width:127px;height:19px;background:#3e4956"></div>
<div class="t" style="left:318px;top:155.5px;height:12px;line-height:12px;font-family:'Liberation Sans','Noto Sans CJK SC',sans-serif;font-size:8px;color:#566270">Shift+F12</div>
<div style="left:314px;top:213px;width:127px;height:19px;background:#59626c"></div>
<div class="t" style="left:368px;top:216.5px;height:12px;line-height:12px;font-family:'Liberation Sans','Noto Sans CJK SC',sans-serif;font-size:8.800px;color:#e3e6ea">设置</div>
<div class="t" style="left:128px;top:255.0px;height:12px;line-height:12px;font-family:'Liberation Sans','Noto Sans CJK SC',sans-serif;font-size:9px;color:#d6dade">格式 - MP4</div>
<div style="left:128px;top:272px;width:313px;height:1px;background:#4a5561"></div>
<div style="left:135px;top:277px;width:306px;height:14px;background:#3e4956"></div>
</div>
<div id="phone" style="left:0;top:0;width:419px;height:776px;background:#000">
  <div style="left:0;top:0;width:419px;height:17px;background:#1f2121"></div>
  <svg style="left:0;top:3px" width="8" height="10" viewBox="0 0 8 10"><rect x="0" y="6" width="1.2" height="4" fill="#788"/><rect x="2.4" y="3.500" width="1.200" height="6.500" fill="#9aa"/><rect x="4.800" y="1" width="1.200" height="9" fill="#677"/></svg>
  <div class="t" style="left:13px;top:3px;font-size:10px;line-height:11px;color:#e6e6e6;letter-spacing:-0.3px">手机投屏</div>
  <svg style="left:345px;top:2px" width="70" height="13" viewBox="0 0 70 13"><path d="M6 6.5h9" stroke="#46525e" stroke-width="1.2"/><rect x="32.5" y="2.5" width="7" height="7" fill="none" stroke="#3f4f66" stroke-width="1.2"/><path d="M57 2l8 8M65 2l-8 8" stroke="#46525e" stroke-width="1.2"/></svg>
  <div style="left:0;top:17px;width:419px;height:22.500px;background:#e0352b;border-top:1.500px solid #7d1a14"></div>
  <!-- signal -->
  <svg style="left:0;top:23.500px" width="20" height="13" viewBox="0 0 20 13"><rect x="1" y="9" width="3" height="3" rx=".8" fill="#fff"/><rect x="5.5" y="6.5" width="3" height="5.5" rx=".8" fill="#fff"/><rect x="10" y="4" width="3" height="8" rx=".8" fill="#ee6f5a"/><rect x="14.5" y="1.5" width="3" height="10.500" rx=".8" fill="#ee6f5a"/></svg>
  <div class="t" style="left:23px;top:23.500px;font-size:12px;line-height:13px;color:#fbe9e6;letter-spacing:.2px">中国移动</div>
  <svg style="left:78px;top:24px" width="15" height="11.500" viewBox="0 0 17 13"><path d="M1.200 4.600a10.500 10.500 0 0 1 14.600 0" fill="none" stroke="#fff" stroke-width="2" stroke-linecap="round"/><path d="M3.900 7.500a6.600 6.600 0 0 1 9.200 0" fill="none" stroke="#fff" stroke-width="2" stroke-linecap="round"/><circle cx="8.500" cy="10.600" r="1.700" fill="#fff"/></svg>
  <svg style="left:181px;top:24.500px" width="12" height="12" viewBox="0 0 12 12"><circle cx="6" cy="6" r="4.300" fill="none" stroke="#fbe4e0" stroke-width="1.100"/><circle cx="6" cy="6" r="1.800" fill="#fbe4e0"/></svg>
  <div class="t" style="left:198px;top:23.500px;font-size:12px;line-height:13px;color:#fff;font-weight:normal;letter-spacing:.3px;-webkit-text-stroke:.4px #fff">11:42</div>
  <svg style="left:343px;top:24.500px" width="12" height="12" viewBox="0 0 12 12"><circle cx="6" cy="6" r="4.300" fill="none" stroke="#fbe4e0" stroke-width="1.100"/><rect x="4" y="5" width="4" height="3.500" fill="#fbe4e0"/><path d="M4.800 5v-1a1.200 1.200 0 0 1 2.400 0v1" fill="none" stroke="#fbe4e0" stroke-width=".8"/></svg>
  <div class="t" style="left:361px;top:23.500px;font-size:12px;line-height:13px;color:#fbe9e6">51%</div>
  <svg style="left:387px;top:23.500px" width="26" height="14" viewBox="0 0 26 14"><rect x="1" y="1.500" width="21" height="11" rx="3" fill="none" stroke="#f2705c" stroke-width="1.200"/><rect x="2.500" y="3" width="9.500" height="8" rx="1.500" fill="#fff"/><path d="M23.300 5v4c1.600-.4 1.600-3.600 0-4z" fill="#f2705c"/></svg>
  <!-- alert -->
  <div style="left:68px;top:316px;width:277px;height:160px;background:#868686;border-radius:11px"></div>
  <div class="t" style="left:68px;top:333px;width:277px;text-align:center;font-size:17px;line-height:20px;color:#fff">短信</div>
  <div class="t" style="left:68px;top:371px;width:277px;text-align:center;font-size:15.600px;line-height:18px;color:#fff">你好，您有份福利请注意查收下</div>
  <div class="t" style="left:68px;top:389px;width:277px;text-align:center;font-size:15.600px;line-height:18px;color:#fff;letter-spacing:-0.200px">维<span class="i" style="margin:0 2px">xx</span>【通过<span class="i" style="margin:0 2.500px">139</span>邮箱发送】</div>
  <div style="left:68px;top:430px;width:277px;height:1px;background:#767676"></div>
  <div class="t" style="left:68px;top:445px;width:277px;text-align:center;font-size:17px;line-height:20px;color:#fff">关闭</div>
  <div class="t" style="left:0;top:716px;width:408px;text-align:center;font-size:15.600px;line-height:18px;color:#ddd">我为什么会收到此信息?</div>
</div>

<div style="left:0px;top:775px;width:1320px;height:27px;background:linear-gradient(180deg,#b4c9e6 0,#a6bfe0 3px,#a3bcde 100%);border-top:1px solid #8ea5c6"></div>
<div style="left:0px;top:776px;width:436px;height:1px;background:#6d7f98"></div>
<div style="left:-30px;top:777px;width:43px;height:25px;background:linear-gradient(180deg,#d3e1f2,#bcd0ea 45%,#b1c7e4 50%,#bdd1ea);border:1px solid #7f93b2;border-bottom:0;border-radius:2px 2px 0 0;box-shadow:inset 0 0 0 1px rgba(255,255,255,.45)"></div>
<div style="left:17px;top:777px;width:42px;height:25px;background:linear-gradient(180deg,#d3e1f2,#bcd0ea 45%,#b1c7e4 50%,#bdd1ea);border:1px solid #7f93b2;border-bottom:0;border-radius:2px 2px 0 0;box-shadow:inset 0 0 0 1px rgba(255,255,255,.45)"></div>
<div style="left:63px;top:777px;width:43px;height:25px;background:linear-gradient(180deg,#d3e1f2,#bcd0ea 45%,#b1c7e4 50%,#bdd1ea);border:1px solid #7f93b2;border-bottom:0;border-radius:2px 2px 0 0;box-shadow:inset 0 0 0 1px rgba(255,255,255,.45)"></div>
<div style="left:110px;top:777px;width:43px;height:25px;background:linear-gradient(180deg,#d3e1f2,#bcd0ea 45%,#b1c7e4 50%,#bdd1ea);border:1px solid #7f93b2;border-bottom:0;border-radius:2px 2px 0 0;box-shadow:inset 0 0 0 1px rgba(255,255,255,.45)"></div>
<div style="left:156px;top:777px;width:42px;height:25px;background:linear-gradient(180deg,#d3e1f2,#bcd0ea 45%,#b1c7e4 50%,#bdd1ea);border:1px solid #7f93b2;border-bottom:0;border-radius:2px 2px 0 0;box-shadow:inset 0 0 0 1px rgba(255,255,255,.45)"></div>
<div style="left:202px;top:777px;width:45px;height:25px;background:linear-gradient(180deg,#d3e1f2,#bcd0ea 45%,#b1c7e4 50%,#bdd1ea);border:1px solid #7f93b2;border-bottom:0;border-radius:2px 2px 0 0;box-shadow:inset 0 0 0 1px rgba(255,255,255,.45)"></div>
<svg style="left:0px;top:780px" width="8" height="22" viewBox="0 0 8 22"><circle cx="-3" cy="11" r="9" fill="#6e8a6c"/><circle cx="-3" cy="11" r="6" fill="#cbd8c2"/></svg>
<svg style="left:24px;top:780px" width="30" height="22" viewBox="0 0 30 22"><path d="M2 4h9l2 2h15v16H2z" fill="#e7d9a6" stroke="#b9a66a" stroke-width=".8"/><rect x="4" y="8" width="22" height="14" fill="#f4ecc9"/><rect x="8" y="12" width="14" height="10" fill="#8fb4dd"/><rect x="10" y="14" width="10" height="8" fill="#d9e7f5"/></svg>
<div style="left:72px;top:778px;width:25px;height:24px;background:#fbfcfe;border-radius:5px 5px 0 0"></div>
<svg style="left:74px;top:782px" width="21" height="18" viewBox="0 0 21 18"><circle cx="6" cy="11" r="4" fill="none" stroke="#2f8df0" stroke-width="2.400"/><circle cx="15" cy="11" r="4" fill="none" stroke="#2f8df0" stroke-width="2.400"/><circle cx="10.500" cy="6" r="3.600" fill="none" stroke="#e8503a" stroke-width="2.200"/><path d="M8 14.500q2.500 2.500 5 0" fill="none" stroke="#2f8df0" stroke-width="2"/></svg>
<svg style="left:120px;top:778px" width="24" height="24" viewBox="0 0 24 24"><path d="M7 1l4 7M17 1l-4 7" stroke="#333" stroke-width="1.200"/><ellipse cx="12" cy="11" rx="5" ry="4" fill="#f1f1f1" stroke="#999" stroke-width=".6"/><ellipse cx="12" cy="19" rx="6.500" ry="6" fill="#c33a2a"/><path d="M12 13v12" stroke="#7a1d14" stroke-width="1"/><circle cx="9" cy="18" r="1.300" fill="#f6d9d2"/><circle cx="15" cy="18" r="1.300" fill="#f6d9d2"/></svg>
<svg style="left:163px;top:778px" width="26" height="24" viewBox="0 0 26 24"><path d="M3 1h16l5 4v19H3a3 3 0 0 1-3-3V4a3 3 0 0 1 3-3z" fill="#e8503a"/><path d="M5 7l8 5-8 5z" fill="#fbe3dc"/><path d="M20 7l-8 5 8 5z" fill="#f7c7bb"/></svg>
<svg style="left:212px;top:778px" width="24" height="24" viewBox="0 0 24 24"><circle cx="12" cy="12" r="10.500" fill="#1b1b1d"/><circle cx="12" cy="12" r="9.300" fill="none" stroke="#c9ced6" stroke-width="1"/><circle cx="12" cy="12" r="6.300" fill="#e0241c"/></svg>
<div style="left:910px;top:776px;width:185px;height:26px;background:linear-gradient(90deg,rgba(201,213,229,0) 0,#c6d3e5 8px,#8e9eb6 20px,#8e9eb6 168px,rgba(142,158,182,0) 185px)"></div>
<svg style="left:943px;top:783px" width="14" height="14" viewBox="0 0 14 14"><circle cx="7" cy="7" r="6.300" fill="#e5492e"/><path d="M4 5c2-2 6-1 5 1s-5 1-5 3 4 2 6 0" fill="none" stroke="#fff" stroke-width="1.500"/></svg>
<div class="t" style="left:959px;top:783.5px;height:12px;line-height:12px;font-family:'Liberation Sans','Noto Sans CJK SC',sans-serif;font-size:10px;color:#d3d7de">中</div>
<svg style="left:973px;top:783px" width="13" height="13" viewBox="0 0 13 13"><path d="M9 1a6 6 0 1 1-8 8 5 5 0 0 0 8-8z" fill="#f5f6f8"/></svg>
<div class="t" style="left:990px;top:784.0px;height:12px;line-height:12px;font-family:'Liberation Sans','Noto Sans CJK SC',sans-serif;font-size:8px;color:#cfd4db">°,</div>
<svg style="left:1003px;top:784px" width="13" height="10" viewBox="0 0 13 10"><rect x=".5" y=".5" width="12" height="9" fill="#eef0f3" stroke="#6f7886" stroke-width=".9"/><path d="M2 3h9M2 5h9M3 7.500h7" stroke="#6f7886" stroke-width=".8"/></svg>
<svg style="left:1018px;top:783px" width="11" height="13" viewBox="0 0 11 13"><circle cx="5.500" cy="3.500" r="2.800" fill="#f4f5f7" stroke="#555e6c" stroke-width=".8"/><path d="M.8 12c0-4 2-5 4.700-5s4.700 1 4.700 5z" fill="#f4f5f7" stroke="#555e6c" stroke-width=".8"/></svg>
<svg style="left:1032px;top:784px" width="13" height="11" viewBox="0 0 13 11"><path d="M1 2h11M1 5.500h11M1 9h11" stroke="#555e6c" stroke-width="1.600"/><path d="M1 2h11M1 5.500h11M1 9h11" stroke="#e3e6ea" stroke-width=".5"/></svg>
<svg style="left:1047px;top:783px" width="13" height="13" viewBox="0 0 13 13"><rect x=".8" y="2.500" width="9.500" height="9.500" fill="#e9ecf0" stroke="#555e6c" stroke-width=".9"/><path d="M5 8l6-6M8 1.500h3.500V5" fill="none" stroke="#555e6c" stroke-width="1.200"/></svg>
<svg style="left:1063px;top:783px" width="14" height="14" viewBox="0 0 14 14"><circle cx="7" cy="7" r="6.300" fill="#1c52b0"/><path d="M5.500 5a1.800 1.800 0 1 1 2.500 1.700c-.7.400-1 .8-1 1.600M7 10.300v.1" stroke="#fff" stroke-width="1.400" fill="none"/></svg>
<svg style="left:1082px;top:781px" width="9" height="17" viewBox="0 0 9 17"><rect x="1.500" y="1" width="5" height="4" fill="#e5e8ec" stroke="#6f7886" stroke-width=".6"/><rect x="3" y="2.500" width="5" height="4" fill="#f5f6f8" stroke="#6f7886" stroke-width=".6"/><path d="M2.500 11.500h4L4.500 14z" fill="#eef0f3"/></svg>
<svg style="left:1096px;top:783px" width="14" height="14" viewBox="0 0 14 14"><circle cx="7" cy="7" r="6.500" fill="#1c1c1e"/><circle cx="7" cy="7" r="3.800" fill="#e0241c"/></svg>
<div style="left:1113px;top:783px;width:15px;height:14px;background:#e8582f;border-radius:2px"></div>
<div class="t" style="left:1115.5px;top:784.0px;height:12px;line-height:12px;font-family:'Liberation Sans','Noto Sans CJK SC',sans-serif;font-size:10px;color:#fff;font-weight:bold">中</div>
<div style="left:1132px;top:783px;width:15px;height:14px;background:#f4f7fb;border-radius:3px"></div>
<svg style="left:1133px;top:785px" width="13" height="10" viewBox="0 0 13 10"><circle cx="4" cy="6" r="2.400" fill="none" stroke="#2f8df0" stroke-width="1.500"/><circle cx="9" cy="6" r="2.400" fill="none" stroke="#2f8df0" stroke-width="1.500"/><circle cx="6.500" cy="3" r="2.200" fill="none" stroke="#e8503a" stroke-width="1.300"/></svg>
<div style="left:1151px;top:783px;width:14px;height:14px;background:#e8503a;border-radius:2px"></div>
<svg style="left:1153px;top:786px" width="10" height="8" viewBox="0 0 10 8"><path d="M0 0l5 4-5 4zM10 0L5 4l5 4z" fill="#fbe3dc"/></svg>
<svg style="left:1168px;top:783px" width="16" height="14" viewBox="0 0 16 14"><ellipse cx="8" cy="7" rx="7.500" ry="6" fill="#7a9a5a"/><ellipse cx="8" cy="7" rx="5.500" ry="4" fill="#e9c9a0"/><ellipse cx="8" cy="7" rx="3.500" ry="2.300" fill="#d4583a"/></svg>
<svg style="left:1187px;top:783px" width="14" height="14" viewBox="0 0 14 14"><path d="M1 5h3l4-4v12L4 9H1z" fill="#c2402c"/><path d="M10 3.500a5 5 0 0 1 0 7" fill="none" stroke="#c2402c" stroke-width="1.200"/><path d="M3 5.500l4-3v9l-4-3z" fill="#f0c0a8"/></svg>
<div style="left:1206px;top:783px;width:14px;height:13px;background:#2b2f2b;border-radius:2px"></div>
<svg style="left:1207px;top:785px" width="12" height="9" viewBox="0 0 12 9"><path d="M1 5c1-3 3-4 6-4 2 0 4 1 4 3s-2 4-5 4-4-1-5-3z" fill="none" stroke="#8ea88a" stroke-width="1.200"/></svg>
<svg style="left:1224px;top:782px" width="14" height="15" viewBox="0 0 14 15"><ellipse cx="7" cy="9" rx="5.500" ry="5.500" fill="#20232a"/><circle cx="7" cy="4.500" r="3.500" fill="#20232a"/><ellipse cx="7" cy="10" rx="3" ry="3.500" fill="#f2f2f2"/><path d="M3 7.500q4 2 8 0" stroke="#d8341f" stroke-width="1.600" fill="none"/><ellipse cx="7" cy="6" rx="1.500" ry=".8" fill="#e9a21c"/></svg>
<svg style="left:1243px;top:783px" width="14" height="14" viewBox="0 0 14 14"><circle cx="7" cy="7" r="6.300" fill="#d95a48"/><circle cx="7" cy="7" r="3.800" fill="#f3d6cc"/><circle cx="7" cy="7" r="2" fill="#c9402c"/></svg>
<svg style="left:1262px;top:782px" width="15" height="15" viewBox="0 0 15 15"><path d="M3 2v12" stroke="#eef0f3" stroke-width="1.300"/><rect x="3.500" y="3" width="9.500" height="7" fill="#f1f3f6" stroke="#6f7886" stroke-width=".8"/><rect x="5.500" y="5.500" width="8" height="6.500" fill="#dfe4ea" stroke="#6f7886" stroke-width=".8"/></svg>
<svg style="left:1282px;top:783px" width="14" height="13" viewBox="0 0 14 13"><path d="M1 4.500h2.500l3.500-3.500v11L3.500 8.500H1z" fill="#f4f5f7" stroke="#8d97a6" stroke-width=".5"/><path d="M9 4a4 4 0 0 1 0 5" fill="none" stroke="#dfe3e8" stroke-width="1.100"/></svg>
<div class="t" style="left:1312px;top:777.5px;height:12px;line-height:12px;font-family:'Liberation Sans','Noto Sans CJK SC',sans-serif;font-size:9px;color:#f4f7fb">11</div>
<div class="t" style="left:1309px;top:790.5px;height:12px;line-height:12px;font-family:'Liberation Sans','Noto Sans CJK SC',sans-serif;font-size:9px;color:#f4f7fb">202</div></body></html>
